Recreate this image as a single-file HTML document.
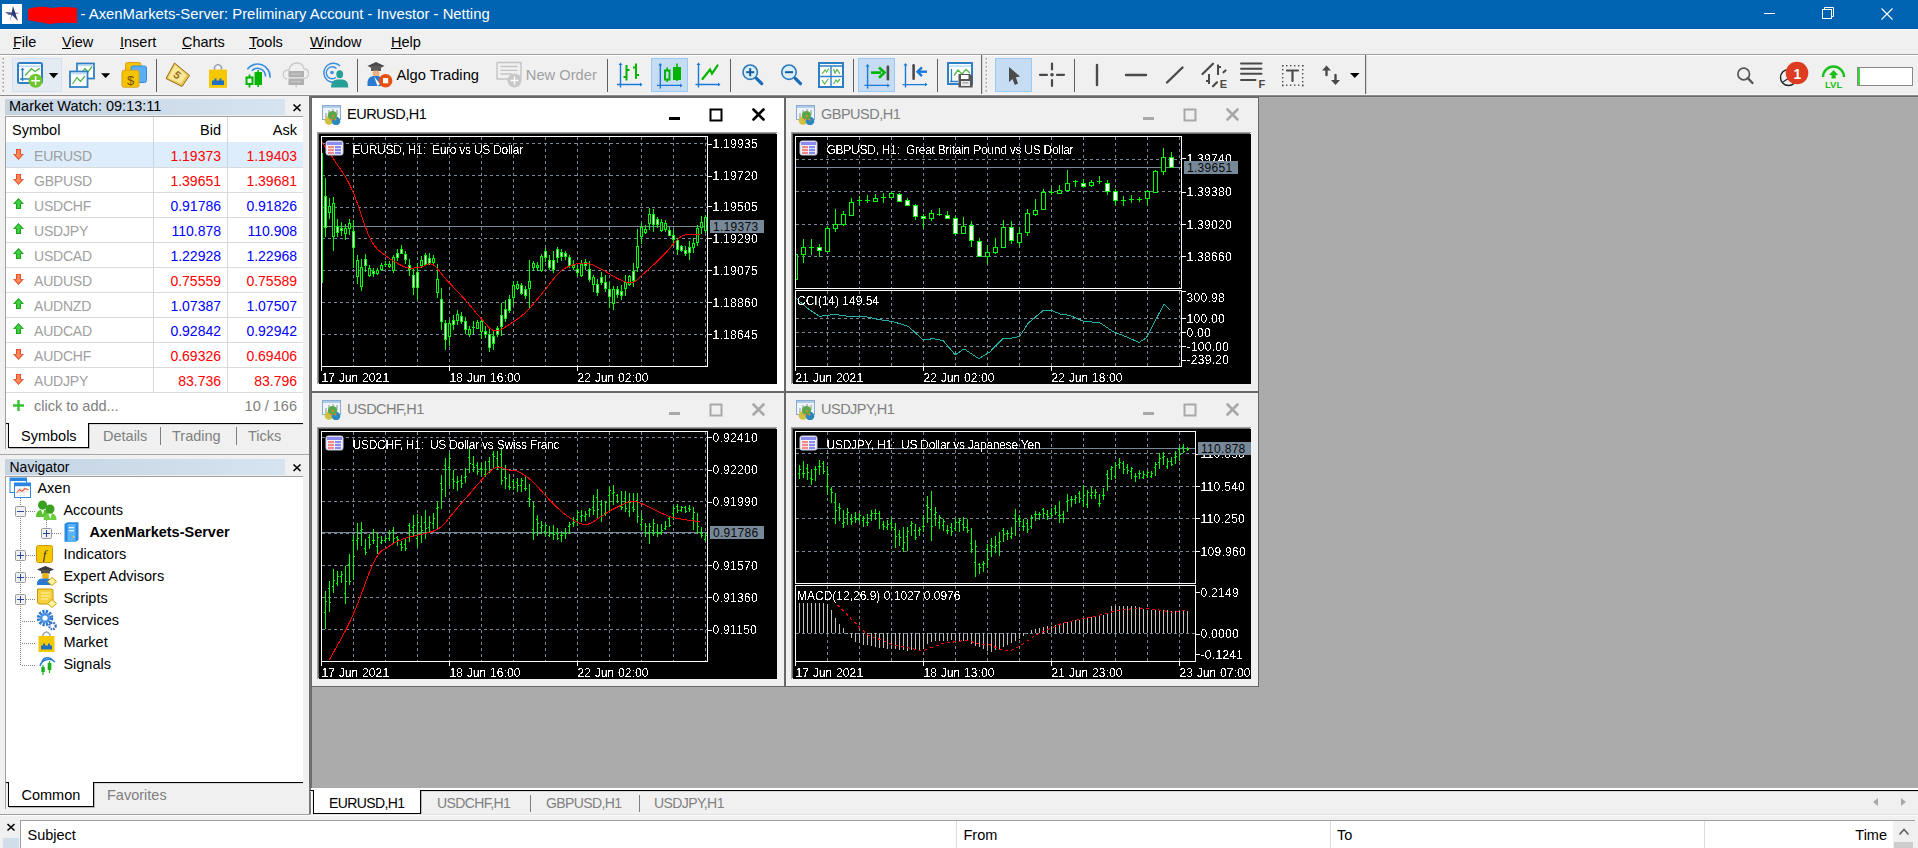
<!DOCTYPE html><html><head><meta charset="utf-8"><style>
*{margin:0;padding:0;box-sizing:border-box}
html,body{width:1918px;height:848px;overflow:hidden;background:#f0f0f0;font-family:"Liberation Sans",sans-serif}
.t{position:absolute;white-space:nowrap;line-height:1}
.r{position:absolute}
.s{position:absolute;overflow:hidden}
</style></head><body><div class="r" style="left:0px;top:0px;width:1918px;height:29px;background:#0063b1;"></div>
<div class="r" style="left:0px;top:28px;width:1918px;height:1px;background:#0059a9;"></div>
<div class="r" style="left:0px;top:29px;width:1918px;height:1px;background:#fbfbfb;"></div>
<svg class="s" style="left:2px;top:4px;" width="20" height="20" viewBox="2 4 20 20"><rect x="2" y="4" width="20" height="20" fill="#fff"/><path d="M13 6 L10 21 L12 15 L18 21 Z" fill="#2a3a78"/><path d="M5 12 L20 13 L9 15 Z" fill="#2a3a78" opacity="0.85"/></svg>
<svg class="s" style="left:27px;top:5px;" width="52" height="20" viewBox="27 5 52 20"><path d="M28 9 Q40 5 52 8 Q64 6 77 8 L77 23 Q60 22 50 24 Q38 22 28 20 Z" fill="#ff0000"/></svg>
<div class="t" style="left:80.5px;top:7.43px;font-size:14.85px;color:#fff;font-weight:normal;">- AxenMarkets-Server: Preliminary Account - Investor - Netting</div>
<svg class="s" style="left:1760px;top:8px;" width="20" height="12" viewBox="1760 8 20 12"><rect x="1764" y="13" width="11" height="1" fill="#fff"/></svg>
<svg class="s" style="left:1815px;top:4px;" width="28" height="20" viewBox="1815 4 28 20"><rect x="1822.5" y="9.5" width="9" height="9" fill="none" stroke="#fff"/><path d="M1824.5 9.5 V7.5 H1833.5 V16.5 H1831.5" fill="none" stroke="#fff"/></svg>
<svg class="s" style="left:1875px;top:4px;" width="28" height="20" viewBox="1875 4 28 20"><path d="M1881.5 8.5 L1892.5 19.5 M1892.5 8.5 L1881.5 19.5" stroke="#fff" stroke-width="1.1"/></svg>
<div class="r" style="left:0px;top:30px;width:1918px;height:24px;background:#f0f0f0;"></div>
<div class="r" style="left:0px;top:54px;width:1918px;height:1px;background:#a0a0a0;"></div>
<div class="t" style="left:13px;top:34.73px;font-size:14.5px;color:#000;font-weight:normal;">File</div>
<div class="t" style="left:62px;top:34.73px;font-size:14.5px;color:#000;font-weight:normal;">View</div>
<div class="t" style="left:120px;top:34.73px;font-size:14.5px;color:#000;font-weight:normal;">Insert</div>
<div class="t" style="left:182px;top:34.73px;font-size:14.5px;color:#000;font-weight:normal;">Charts</div>
<div class="t" style="left:249px;top:34.73px;font-size:14.5px;color:#000;font-weight:normal;">Tools</div>
<div class="t" style="left:310px;top:34.73px;font-size:14.5px;color:#000;font-weight:normal;">Window</div>
<div class="t" style="left:391px;top:34.73px;font-size:14.5px;color:#000;font-weight:normal;">Help</div>
<div class="r" style="left:13px;top:48px;width:6.5px;height:1px;background:#000"></div>
<div class="r" style="left:62px;top:48px;width:8.7px;height:1px;background:#000"></div>
<div class="r" style="left:120px;top:48px;width:4.0px;height:1px;background:#000"></div>
<div class="r" style="left:182px;top:48px;width:9.0px;height:1px;background:#000"></div>
<div class="r" style="left:249px;top:48px;width:7.0px;height:1px;background:#000"></div>
<div class="r" style="left:310px;top:48px;width:13.5px;height:1px;background:#000"></div>
<div class="r" style="left:391px;top:48px;width:10.5px;height:1px;background:#000"></div>
<div class="r" style="left:0px;top:55px;width:1918px;height:41px;background:#f0f0f0;"></div>
<div class="r" style="left:0px;top:55px;width:1918px;height:1px;background:#ffffff;"></div>
<div class="r" style="left:0px;top:94px;width:1918px;height:1px;background:#f6f6f6;"></div>
<div class="r" style="left:0px;top:95px;width:1918px;height:1px;background:#8a8a8a;"></div>
<svg class="s" style="left:0;top:54px" width="1918" height="42" viewBox="0 54 1918 42"><rect x="2.5" y="58" width="1.5" height="1.5" fill="#9a9a9a"/><rect x="2.5" y="62" width="1.5" height="1.5" fill="#9a9a9a"/><rect x="2.5" y="66" width="1.5" height="1.5" fill="#9a9a9a"/><rect x="2.5" y="70" width="1.5" height="1.5" fill="#9a9a9a"/><rect x="2.5" y="74" width="1.5" height="1.5" fill="#9a9a9a"/><rect x="2.5" y="78" width="1.5" height="1.5" fill="#9a9a9a"/><rect x="2.5" y="82" width="1.5" height="1.5" fill="#9a9a9a"/><rect x="2.5" y="86" width="1.5" height="1.5" fill="#9a9a9a"/><rect x="2.5" y="90" width="1.5" height="1.5" fill="#9a9a9a"/><rect x="985.5" y="58" width="1.5" height="1.5" fill="#9a9a9a"/><rect x="985.5" y="62" width="1.5" height="1.5" fill="#9a9a9a"/><rect x="985.5" y="66" width="1.5" height="1.5" fill="#9a9a9a"/><rect x="985.5" y="70" width="1.5" height="1.5" fill="#9a9a9a"/><rect x="985.5" y="74" width="1.5" height="1.5" fill="#9a9a9a"/><rect x="985.5" y="78" width="1.5" height="1.5" fill="#9a9a9a"/><rect x="985.5" y="82" width="1.5" height="1.5" fill="#9a9a9a"/><rect x="985.5" y="86" width="1.5" height="1.5" fill="#9a9a9a"/><rect x="985.5" y="90" width="1.5" height="1.5" fill="#9a9a9a"/><rect x="12.5" y="58.5" width="49" height="33" fill="#e4ebf3" stroke="#d2e2f2"/><rect x="18" y="63" width="24" height="20" rx="1.5" fill="#fff" stroke="#2f7fc4" stroke-width="2"/><rect x="19" y="65.5" width="22" height="1.3" fill="#a8d4f8"/><path d="M22.5 69 V81 M20 79 H31" stroke="#2f7fc4" stroke-width="1.5"/><path d="M20.5 70 L22.5 67.5 L24.5 70 Z" fill="#2f7fc4"/><path d="M25 75.5 L31.5 68.8 L35 71.5 L39.8 68.3" fill="none" stroke="#52b848" stroke-width="1.4"/><circle cx="35.6" cy="80.7" r="7" fill="#6fc72f"/><path d="M35.6 76.3 V85.1 M31.2 80.7 H40" stroke="#fff" stroke-width="1.5"/><path d="M49 73 L58.3 73 L53.65 78.2 Z" fill="#000"/><rect x="77" y="63.5" width="17" height="15" fill="#fff" stroke="#2f7fc4" stroke-width="1.8"/><rect x="77.5" y="65.2" width="16" height="1" fill="#a8d4f8"/><path d="M80 75 L85 68.5 L88 72 L92 66.5" fill="none" stroke="#52b848" stroke-width="1.3"/><rect x="70" y="71.5" width="17.5" height="15.5" fill="#fff" stroke="#2f7fc4" stroke-width="1.8"/><rect x="70.5" y="73.3" width="16.5" height="1" fill="#a8d4f8"/><path d="M72.5 84 L77 77.5 L80.5 81.5 L85 76" fill="none" stroke="#52b848" stroke-width="1.3"/><path d="M101 73.2 L110.2 73.2 L105.6 78 Z" fill="#000"/><rect x="125.5" y="62.5" width="15.5" height="13" rx="2" fill="#f5c400" stroke="#d9a020"/><rect x="131" y="66" width="15.5" height="16.5" rx="2" fill="#5aaef5" stroke="#3a8ad8"/><rect x="122" y="70.2" width="17" height="17" rx="2" fill="#f5c400" stroke="#d9a020"/><text x="130.5" y="84.5" font-size="13" font-family="Liberation Sans" fill="#7a5000" text-anchor="middle">$</text><rect x="156" y="59" width="1" height="33" fill="#5f5f5f"/><rect x="357" y="59" width="1" height="33" fill="#5f5f5f"/><rect x="607" y="59" width="1" height="33" fill="#5f5f5f"/><rect x="730" y="59" width="1" height="33" fill="#5f5f5f"/><rect x="853" y="59" width="1" height="33" fill="#5f5f5f"/><rect x="937" y="59" width="1" height="33" fill="#5f5f5f"/><rect x="1074" y="59" width="1" height="33" fill="#5f5f5f"/><path d="M166 78.5 L174.5 63 L189.5 75.5 L182 86.5 Z" fill="#e8c850" stroke="#9a6a20" stroke-width="1"/><path d="M168 78 L175 65 L186.5 75 L181 83.5 Z" fill="#f8e89a"/><text x="177.5" y="79" font-size="11" font-weight="bold" font-family="Liberation Sans" fill="#9a6a20" transform="rotate(40 177.5 75)" text-anchor="middle">5</text><path d="M214.5 70 V67 Q218 62 221.5 67 V70" fill="none" stroke="#9aa4b0" stroke-width="1.6"/><rect x="209" y="69.6" width="18" height="18.2" fill="#f5c800"/><path d="M212 85 V80.5 H214.5 V78.5 H216.5 V80.5 H219.5 V78.5 H221.5 V80.5 H224 V85 Z" fill="#1e6fc0"/><path d="M251.8 70.8 A8 8 0 0 1 265.5 76.5" fill="none" stroke="#3a8ee0" stroke-width="1.6"/><path d="M247.3 69.3 A12.5 12.5 0 0 1 269.95 77.6" fill="none" stroke="#3a8ee0" stroke-width="1.7"/><rect x="248.6" y="74.5" width="1.8" height="13" fill="#00b400"/><rect x="246.5" y="77.5" width="6" height="6.5" fill="#f0f0f0" stroke="#00b400" stroke-width="2"/><rect x="257.3" y="70" width="1.6" height="17" fill="#00b400"/><rect x="254.5" y="72" width="7.5" height="13" fill="#00b400"/><path d="M287 79 Q282 78 283.5 73 Q285 69 289 70.5 Q290 63 297 63 Q303 63 304 69 Q309 69 308.5 74 Q308 78 304 78.5" fill="none" stroke="#c8c8c8" stroke-width="1.3"/><rect x="288.5" y="71" width="15.5" height="6.3" fill="#b0b0b0"/><rect x="288.5" y="78.5" width="15.5" height="6.5" fill="#b0b0b0"/><rect x="291" y="73.5" width="10" height="1.2" fill="#c8c8c8"/><rect x="291" y="81" width="10" height="1.2" fill="#c8c8c8"/><rect x="295.7" y="85" width="1" height="2.5" fill="#c0c0c0"/><circle cx="332" cy="72.5" r="1.8" fill="#3a8ee0"/><path d="M336.5 68.5 A6 6 0 1 0 336 77.5" fill="none" stroke="#3a8ee0" stroke-width="1.4"/><path d="M340 66 A9.5 9.5 0 1 0 337 81.5" fill="none" stroke="#3a8ee0" stroke-width="1.5"/><ellipse cx="339.7" cy="74.2" rx="3.4" ry="4" fill="#26a096"/><path d="M331 87.6 Q331 80 337 79.5 H342.5 Q348.5 80 348.3 87.6 Z" fill="#26a096"/><path d="M367.5 66 L376 62 L384.5 66 L376 70 Z" fill="#4a4a4a"/><rect x="371" y="66" width="10" height="5" fill="#5a5a5a"/><ellipse cx="376" cy="73.5" rx="3.5" ry="3" fill="#f0b080"/><path d="M367.5 86 Q366.5 77 373 76 L379 76 Q382 78 382 86 Z" fill="#2a7ad0"/><path d="M374 76.5 L377.5 86 L380 84 Z" fill="#fff"/><circle cx="385.6" cy="80.7" r="6.8" fill="#e85010"/><rect x="383" y="78.1" width="5.2" height="5.2" fill="#fff"/><text x="396.5" y="80.4" font-size="14.7" font-family="Liberation Sans" fill="#000">Algo Trading</text><path d="M497 62.5 H521 V79 M497 62.5 V79 H510" fill="none" stroke="#c4c4c4" stroke-width="1.4"/><path d="M500.5 66.5 H517.5 M500.5 70.3 H517.5 M500.5 74 H512" stroke="#c4c4c4" stroke-width="1.3"/><circle cx="514.5" cy="80.5" r="7" fill="#c8c8c8"/><path d="M514.5 76.5 V84.5 M510.5 80.5 H518.5" stroke="#fff" stroke-width="1.4"/><text x="525.8" y="80.4" font-size="14.7" font-family="Liberation Sans" fill="#a0a0a0">New Order</text><path d="M620.5 64.0 V87.5 M617 84.5 H641.0" stroke="#1a78d8" stroke-width="1.4"/><path d="M618.5 65.0 L620.5 62.5 L622.5 65.0 Z M640.0 82.5 L642.5 84.5 L640.0 86.5 Z" fill="#1a78d8"/><path d="M626.5 65 V80.5 M623.5 77 H626.5 M626.5 70 H629.5 M636 63.5 V78.8 M633 67.5 H636 M636 75 H639" stroke="#00b400" stroke-width="2"/><rect x="651.5" y="58.5" width="36" height="33" fill="#c5dcf2" stroke="#99c9f5"/><path d="M660.3 64.5 V88.4 M657 85.4 H681.0" stroke="#1a78d8" stroke-width="1.4"/><path d="M658.3 65.5 L660.3 63 L662.3 65.5 Z M680.0 83.4 L682.5 85.4 L680.0 87.4 Z" fill="#1a78d8"/><path d="M667.2 67.5 V82 M677 63.5 V81" stroke="#00b400" stroke-width="1.6"/><rect x="665" y="70.5" width="4.5" height="9" fill="#c5dcf2" stroke="#00b400" stroke-width="2"/><rect x="673" y="67" width="8" height="13" fill="#00b400"/><path d="M698.5 64.0 V87.5 M695.5 84.5 H719.0" stroke="#1a78d8" stroke-width="1.4"/><path d="M696.5 65.0 L698.5 62.5 L700.5 65.0 Z M718.0 82.5 L720.5 84.5 L718.0 86.5 Z" fill="#1a78d8"/><path d="M702.5 79 L710 69.5 L712 73.5 L717.5 65.5" fill="none" stroke="#00b400" stroke-width="2.2" stroke-linecap="round"/><path d="M756.2 78.2 L761.7 83.7" stroke="#1a6ab8" stroke-width="3.2" stroke-linecap="round"/><circle cx="750.2" cy="72.2" r="7.2" fill="#d8eef8" stroke="#2d78b8" stroke-width="1.6"/><path d="M746.2 72.2 H754.2" stroke="#1a5a98" stroke-width="2"/><path d="M750.2 68.2 V76.2" stroke="#1a5a98" stroke-width="2"/><path d="M795 78.2 L800.5 83.7" stroke="#1a6ab8" stroke-width="3.2" stroke-linecap="round"/><circle cx="789" cy="72.2" r="7.2" fill="#d8eef8" stroke="#2d78b8" stroke-width="1.6"/><path d="M785 72.2 H793" stroke="#1a5a98" stroke-width="2"/><rect x="819" y="63" width="24" height="24" fill="#fff" stroke="#2f7fc4" stroke-width="2"/><path d="M819 66 H843 M831 66 V87 M819 76.5 H843" stroke="#2f7fc4" stroke-width="1.4"/><path d="M822 74 L825 70 L826.5 72 L829 68.5 M833.5 69 L835 73 L837 69.5 L840 74 M822 80 L824.5 84 L828.5 78.5 M833.5 84 L836 80 L837.5 82 L840 79" fill="none" stroke="#52b848" stroke-width="1.2"/><rect x="858.5" y="58.5" width="36" height="33" fill="#c5dcf2" stroke="#99c9f5"/><path d="M867.6 65.5 V88.4 M864.5 85.4 H888.3" stroke="#1a78d8" stroke-width="1.4"/><path d="M865.6 66.5 L867.6 64 L869.6 66.5 Z M887.3 83.4 L889.8 85.4 L887.3 87.4 Z" fill="#1a78d8"/><path d="M871 72.6 H881" stroke="#00b400" stroke-width="2.6"/><path d="M879 67.5 L884.5 72.6 L879 77.7" fill="none" stroke="#00b400" stroke-width="2.6"/><rect x="886.6" y="65.5" width="2.6" height="15" rx="1.2" fill="#4a4a4a"/><path d="M905.5 64.5 V87.6 M902.5 84.6 H926.0" stroke="#1a78d8" stroke-width="1.4"/><path d="M903.5 65.5 L905.5 63 L907.5 65.5 Z M925.0 82.6 L927.5 84.6 L925.0 86.6 Z" fill="#1a78d8"/><rect x="912.3" y="64" width="2.6" height="16" rx="1.2" fill="#4a4a4a"/><path d="M927 71.7 H919" stroke="#1a78d8" stroke-width="2.4"/><path d="M922 67.3 L917.5 71.7 L922 76.1" fill="none" stroke="#1a78d8" stroke-width="2.4"/><rect x="948" y="63" width="24" height="21" fill="#fff" stroke="#2f7fc4" stroke-width="2"/><rect x="949" y="65.5" width="22" height="1.2" fill="#a8d4f8"/><path d="M951.5 69 V81.5 M950 81.5 H958" stroke="#2f7fc4" stroke-width="1.3"/><path d="M954 75.5 L958 70 L962 74 L966 69.5 L970 73" fill="none" stroke="#52b848" stroke-width="1.3"/><path d="M958.5 74 H970 L972.6 76.5 V87.4 H958.5 Z" fill="#555"/><rect x="961" y="75" width="7.5" height="4" fill="#fff"/><rect x="961" y="81" width="9" height="5" fill="#e8e8e8"/><rect x="962.5" y="82.5" width="6" height="0.8" fill="#777"/><rect x="981" y="55" width="1.2" height="39" fill="#6a6a6a"/><rect x="1365" y="55" width="1.2" height="39" fill="#6a6a6a"/><rect x="995.5" y="58.5" width="36" height="33" fill="#c5dcf2" stroke="#99c9f5"/><path d="M1009 67 L1020 76.5 L1015.8 77.3 L1018 83.5 L1014.8 85 L1012.5 79 L1009 82 Z" fill="#4a4a4a"/><path d="M1052 63.5 V69.5 M1052 80 V86 M1040 74.8 H1047 M1057 74.8 H1064" stroke="#4a4a4a" stroke-width="2.2" stroke-linecap="round"/><circle cx="1052" cy="74.8" r="1.8" fill="#4a4a4a"/><path d="M1097 65 V85 M1126 75 H1146 M1167 82.5 L1182.5 67.5" stroke="#4a4a4a" stroke-width="2.4" stroke-linecap="round"/><path d="M1202.5 74 L1213 63.7 M1213 86.3 L1217 82.3 M1223.5 72.3 L1225.5 70.5" stroke="#4a4a4a" stroke-width="2.2" stroke-linecap="round"/><path d="M1218 64.5 V75 M1218 67 H1221 M1209 74 V84 M1206 81 H1209" stroke="#4a4a4a" stroke-width="2"/><text x="1219.8" y="87.5" font-size="11" font-weight="bold" font-family="Liberation Sans" fill="#4a4a4a">E</text><path d="M1241 63.6 H1261.5 M1241 68.8 H1261.5 M1241 73.8 H1261.5 M1241 80 H1255.5" stroke="#4a4a4a" stroke-width="2" stroke-linecap="round"/><text x="1258.5" y="87.5" font-size="11" font-weight="bold" font-family="Liberation Sans" fill="#4a4a4a">F</text><rect x="1282" y="65" width="1.4" height="1.4" fill="#4a4a4a"/><rect x="1282" y="84.5" width="1.4" height="1.4" fill="#4a4a4a"/><rect x="1282" y="65" width="1.4" height="1.4" fill="#4a4a4a"/><rect x="1302" y="65" width="1.4" height="1.4" fill="#4a4a4a"/><rect x="1286" y="65" width="1.4" height="1.4" fill="#4a4a4a"/><rect x="1286" y="84.5" width="1.4" height="1.4" fill="#4a4a4a"/><rect x="1282" y="69" width="1.4" height="1.4" fill="#4a4a4a"/><rect x="1302" y="69" width="1.4" height="1.4" fill="#4a4a4a"/><rect x="1290" y="65" width="1.4" height="1.4" fill="#4a4a4a"/><rect x="1290" y="84.5" width="1.4" height="1.4" fill="#4a4a4a"/><rect x="1282" y="73" width="1.4" height="1.4" fill="#4a4a4a"/><rect x="1302" y="73" width="1.4" height="1.4" fill="#4a4a4a"/><rect x="1294" y="65" width="1.4" height="1.4" fill="#4a4a4a"/><rect x="1294" y="84.5" width="1.4" height="1.4" fill="#4a4a4a"/><rect x="1282" y="77" width="1.4" height="1.4" fill="#4a4a4a"/><rect x="1302" y="77" width="1.4" height="1.4" fill="#4a4a4a"/><rect x="1298" y="65" width="1.4" height="1.4" fill="#4a4a4a"/><rect x="1298" y="84.5" width="1.4" height="1.4" fill="#4a4a4a"/><rect x="1282" y="81" width="1.4" height="1.4" fill="#4a4a4a"/><rect x="1302" y="81" width="1.4" height="1.4" fill="#4a4a4a"/><rect x="1302" y="65" width="1.4" height="1.4" fill="#4a4a4a"/><rect x="1302" y="84.5" width="1.4" height="1.4" fill="#4a4a4a"/><rect x="1282" y="85" width="1.4" height="1.4" fill="#4a4a4a"/><rect x="1302" y="85" width="1.4" height="1.4" fill="#4a4a4a"/><path d="M1287 70.5 H1298 M1292.5 70.5 V81" stroke="#4a4a4a" stroke-width="2.2" stroke-linecap="round"/><path d="M1322 70.5 L1326.5 65.5 L1331 70.5 Z M1331 80 L1335.5 85 L1340 80 Z" fill="#4a4a4a"/><path d="M1326.5 69 V75 M1335.5 75 V81" stroke="#4a4a4a" stroke-width="2.4" stroke-linecap="round"/><path d="M1350 73 L1359.5 73 L1354.75 78 Z" fill="#000"/><circle cx="1743.7" cy="74" r="5.8" fill="none" stroke="#555" stroke-width="1.7"/><path d="M1747.8 78.2 L1752.5 83" stroke="#555" stroke-width="2.4" stroke-linecap="round"/><circle cx="1788.5" cy="77.5" r="8" fill="none" stroke="#222" stroke-width="1.4"/><path d="M1783 82 L1789 78" stroke="#222" stroke-width="1.2"/><circle cx="1797" cy="73" r="11.3" fill="#dd3b22"/><text x="1797.3" y="79" font-size="14" font-weight="bold" font-family="Liberation Sans" fill="#fff" text-anchor="middle">1</text><path d="M1823 77 A10.5 10.5 0 0 1 1844 77" fill="none" stroke="#1cc01c" stroke-width="2.4"/><path d="M1829 75 L1833.6 70 L1838.2 75 H1835.7 V78.5 H1831.5 V75 Z" fill="#1cc01c"/><text x="1833.6" y="88.3" font-size="9.5" font-weight="bold" font-family="Liberation Sans" fill="#1cc01c" text-anchor="middle">LVL</text><rect x="1857.5" y="67.5" width="55" height="18" fill="#fff" stroke="#888" stroke-width="1"/><rect x="1858" y="68" width="2" height="17" fill="#3bd83b"/></svg>
<div class="r" style="left:0px;top:96px;width:309px;height:719px;background:#f0f0f0;"></div>
<div class="r" style="left:309px;top:96px;width:3px;height:692px;background:#6e6e6e;"></div>
<div class="r" style="left:5px;top:99px;width:280px;height:16px;background:linear-gradient(90deg,#c5d4e3,#d6e3f0)"></div>
<div class="t" style="left:9px;top:99.23px;font-size:14.5px;color:#000;font-weight:normal;">Market Watch: 09:13:11</div>
<svg class="s" style="left:290px;top:101px;" width="14" height="12" viewBox="290 101 14 12"><path d="M293.5 104.5 L300.5 111 M300.5 104.5 L293.5 111" stroke="#000" stroke-width="1.6"/></svg>
<div class="r" style="left:5px;top:116px;width:299px;height:307px;background:#ffffff;border-top:1px solid #a0a0a0;border-left:1px solid #a0a0a0"></div>
<div class="r" style="left:303px;top:116px;width:2px;height:307px;background:#f0f0f0;"></div>
<div class="r" style="left:153px;top:117px;width:1px;height:276px;background:#d8d8d8;"></div>
<div class="r" style="left:227px;top:117px;width:1px;height:276px;background:#d8d8d8;"></div>
<div class="t" style="left:12px;top:123.23px;font-size:14.5px;color:#000;font-weight:normal;">Symbol</div>
<div class="t" style="right:1697px;top:123.23px;font-size:14.5px;color:#000;font-weight:normal;">Bid</div>
<div class="t" style="right:1621px;top:123.23px;font-size:14.5px;color:#000;font-weight:normal;">Ask</div>
<div class="r" style="left:6px;top:142px;width:297px;height:25px;background:#deedfb;"></div>
<div class="r" style="left:153px;top:142px;width:1px;height:25px;background:#c8d4de;"></div>
<div class="r" style="left:227px;top:142px;width:1px;height:25px;background:#c8d4de;"></div>
<div class="r" style="left:6px;top:167px;width:297px;height:1px;background:#dadada;"></div>
<svg class="s" style="left:12px;top:147px;" width="14" height="14" viewBox="12 147 14 14"><path d="M18.5 160 L24 154 L21 154 L21 149 L16 149 L16 154 L13 154 Z" fill="#e8502a"/><path d="M18.5 158.5 L22 154.5 L19.8 154.5 L19.8 150 L17.2 150 L17.2 154.5 L15 154.5 Z" fill="#ff8a5c"/></svg>
<div class="t" style="left:34px;top:148.65px;font-size:14px;color:#a0a0a0;font-weight:normal;letter-spacing:-0.2px">EURUSD</div>
<div class="t" style="right:1697px;top:148.65px;font-size:14px;color:#ff0000;font-weight:normal;">1.19373</div>
<div class="t" style="right:1621px;top:148.65px;font-size:14px;color:#ff0000;font-weight:normal;">1.19403</div>
<div class="r" style="left:6px;top:192px;width:297px;height:1px;background:#dadada;"></div>
<svg class="s" style="left:12px;top:172px;" width="14" height="14" viewBox="12 172 14 14"><path d="M18.5 185 L24 179 L21 179 L21 174 L16 174 L16 179 L13 179 Z" fill="#e8502a"/><path d="M18.5 183.5 L22 179.5 L19.8 179.5 L19.8 175 L17.2 175 L17.2 179.5 L15 179.5 Z" fill="#ff8a5c"/></svg>
<div class="t" style="left:34px;top:173.65px;font-size:14px;color:#a0a0a0;font-weight:normal;letter-spacing:-0.2px">GBPUSD</div>
<div class="t" style="right:1697px;top:173.65px;font-size:14px;color:#ff0000;font-weight:normal;">1.39651</div>
<div class="t" style="right:1621px;top:173.65px;font-size:14px;color:#ff0000;font-weight:normal;">1.39681</div>
<div class="r" style="left:6px;top:217px;width:297px;height:1px;background:#dadada;"></div>
<svg class="s" style="left:12px;top:197px;" width="14" height="14" viewBox="12 197 14 14"><path d="M18.5 198 L24 204 L21 204 L21 209 L16 209 L16 204 L13 204 Z" fill="#1aa51a"/><path d="M18.5 199.5 L22 203.5 L19.8 203.5 L19.8 208 L17.2 208 L17.2 203.5 L15 203.5 Z" fill="#44d044"/></svg>
<div class="t" style="left:34px;top:198.65px;font-size:14px;color:#a0a0a0;font-weight:normal;letter-spacing:-0.2px">USDCHF</div>
<div class="t" style="right:1697px;top:198.65px;font-size:14px;color:#0000ff;font-weight:normal;">0.91786</div>
<div class="t" style="right:1621px;top:198.65px;font-size:14px;color:#0000ff;font-weight:normal;">0.91826</div>
<div class="r" style="left:6px;top:242px;width:297px;height:1px;background:#dadada;"></div>
<svg class="s" style="left:12px;top:222px;" width="14" height="14" viewBox="12 222 14 14"><path d="M18.5 223 L24 229 L21 229 L21 234 L16 234 L16 229 L13 229 Z" fill="#1aa51a"/><path d="M18.5 224.5 L22 228.5 L19.8 228.5 L19.8 233 L17.2 233 L17.2 228.5 L15 228.5 Z" fill="#44d044"/></svg>
<div class="t" style="left:34px;top:223.65px;font-size:14px;color:#a0a0a0;font-weight:normal;letter-spacing:-0.2px">USDJPY</div>
<div class="t" style="right:1697px;top:223.65px;font-size:14px;color:#0000ff;font-weight:normal;">110.878</div>
<div class="t" style="right:1621px;top:223.65px;font-size:14px;color:#0000ff;font-weight:normal;">110.908</div>
<div class="r" style="left:6px;top:267px;width:297px;height:1px;background:#dadada;"></div>
<svg class="s" style="left:12px;top:247px;" width="14" height="14" viewBox="12 247 14 14"><path d="M18.5 248 L24 254 L21 254 L21 259 L16 259 L16 254 L13 254 Z" fill="#1aa51a"/><path d="M18.5 249.5 L22 253.5 L19.8 253.5 L19.8 258 L17.2 258 L17.2 253.5 L15 253.5 Z" fill="#44d044"/></svg>
<div class="t" style="left:34px;top:248.65px;font-size:14px;color:#a0a0a0;font-weight:normal;letter-spacing:-0.2px">USDCAD</div>
<div class="t" style="right:1697px;top:248.65px;font-size:14px;color:#0000ff;font-weight:normal;">1.22928</div>
<div class="t" style="right:1621px;top:248.65px;font-size:14px;color:#0000ff;font-weight:normal;">1.22968</div>
<div class="r" style="left:6px;top:292px;width:297px;height:1px;background:#dadada;"></div>
<svg class="s" style="left:12px;top:272px;" width="14" height="14" viewBox="12 272 14 14"><path d="M18.5 285 L24 279 L21 279 L21 274 L16 274 L16 279 L13 279 Z" fill="#e8502a"/><path d="M18.5 283.5 L22 279.5 L19.8 279.5 L19.8 275 L17.2 275 L17.2 279.5 L15 279.5 Z" fill="#ff8a5c"/></svg>
<div class="t" style="left:34px;top:273.65px;font-size:14px;color:#a0a0a0;font-weight:normal;letter-spacing:-0.2px">AUDUSD</div>
<div class="t" style="right:1697px;top:273.65px;font-size:14px;color:#ff0000;font-weight:normal;">0.75559</div>
<div class="t" style="right:1621px;top:273.65px;font-size:14px;color:#ff0000;font-weight:normal;">0.75589</div>
<div class="r" style="left:6px;top:317px;width:297px;height:1px;background:#dadada;"></div>
<svg class="s" style="left:12px;top:297px;" width="14" height="14" viewBox="12 297 14 14"><path d="M18.5 298 L24 304 L21 304 L21 309 L16 309 L16 304 L13 304 Z" fill="#1aa51a"/><path d="M18.5 299.5 L22 303.5 L19.8 303.5 L19.8 308 L17.2 308 L17.2 303.5 L15 303.5 Z" fill="#44d044"/></svg>
<div class="t" style="left:34px;top:298.65px;font-size:14px;color:#a0a0a0;font-weight:normal;letter-spacing:-0.2px">AUDNZD</div>
<div class="t" style="right:1697px;top:298.65px;font-size:14px;color:#0000ff;font-weight:normal;">1.07387</div>
<div class="t" style="right:1621px;top:298.65px;font-size:14px;color:#0000ff;font-weight:normal;">1.07507</div>
<div class="r" style="left:6px;top:342px;width:297px;height:1px;background:#dadada;"></div>
<svg class="s" style="left:12px;top:322px;" width="14" height="14" viewBox="12 322 14 14"><path d="M18.5 323 L24 329 L21 329 L21 334 L16 334 L16 329 L13 329 Z" fill="#1aa51a"/><path d="M18.5 324.5 L22 328.5 L19.8 328.5 L19.8 333 L17.2 333 L17.2 328.5 L15 328.5 Z" fill="#44d044"/></svg>
<div class="t" style="left:34px;top:323.65px;font-size:14px;color:#a0a0a0;font-weight:normal;letter-spacing:-0.2px">AUDCAD</div>
<div class="t" style="right:1697px;top:323.65px;font-size:14px;color:#0000ff;font-weight:normal;">0.92842</div>
<div class="t" style="right:1621px;top:323.65px;font-size:14px;color:#0000ff;font-weight:normal;">0.92942</div>
<div class="r" style="left:6px;top:367px;width:297px;height:1px;background:#dadada;"></div>
<svg class="s" style="left:12px;top:347px;" width="14" height="14" viewBox="12 347 14 14"><path d="M18.5 360 L24 354 L21 354 L21 349 L16 349 L16 354 L13 354 Z" fill="#e8502a"/><path d="M18.5 358.5 L22 354.5 L19.8 354.5 L19.8 350 L17.2 350 L17.2 354.5 L15 354.5 Z" fill="#ff8a5c"/></svg>
<div class="t" style="left:34px;top:348.65px;font-size:14px;color:#a0a0a0;font-weight:normal;letter-spacing:-0.2px">AUDCHF</div>
<div class="t" style="right:1697px;top:348.65px;font-size:14px;color:#ff0000;font-weight:normal;">0.69326</div>
<div class="t" style="right:1621px;top:348.65px;font-size:14px;color:#ff0000;font-weight:normal;">0.69406</div>
<div class="r" style="left:6px;top:392px;width:297px;height:1px;background:#dadada;"></div>
<svg class="s" style="left:12px;top:372px;" width="14" height="14" viewBox="12 372 14 14"><path d="M18.5 385 L24 379 L21 379 L21 374 L16 374 L16 379 L13 379 Z" fill="#e8502a"/><path d="M18.5 383.5 L22 379.5 L19.8 379.5 L19.8 375 L17.2 375 L17.2 379.5 L15 379.5 Z" fill="#ff8a5c"/></svg>
<div class="t" style="left:34px;top:373.65px;font-size:14px;color:#a0a0a0;font-weight:normal;letter-spacing:-0.2px">AUDJPY</div>
<div class="t" style="right:1697px;top:373.65px;font-size:14px;color:#ff0000;font-weight:normal;">83.736</div>
<div class="t" style="right:1621px;top:373.65px;font-size:14px;color:#ff0000;font-weight:normal;">83.796</div>
<svg class="s" style="left:12px;top:398px;" width="14" height="14" viewBox="12 398 14 14"><path d="M18.5 400 V411 M13 405.5 H24" stroke="#36c236" stroke-width="2.4"/></svg>
<div class="t" style="left:34px;top:398.73px;font-size:14.5px;color:#808080;font-weight:normal;">click to add...</div>
<div class="t" style="right:1621px;top:398.73px;font-size:14.5px;color:#808080;font-weight:normal;">10 / 166</div>
<div class="r" style="left:5px;top:424px;width:298px;height:24px;background:#f0f0f0;"></div>
<div class="r" style="left:5px;top:423px;width:298px;height:1px;background:#000;"></div>
<div class="r" style="left:5px;top:424px;width:298px;height:1px;background:#d8d8d8;"></div>
<div class="r" style="left:8px;top:423px;width:81px;height:25px;background:#fff;border:1px solid #000;border-top:none;box-shadow:1px 1px 0 #b8b8b8"></div>
<div class="r" style="left:9px;top:423px;width:79px;height:2px;background:#fff;"></div>
<div class="t" style="left:21px;top:428.73px;font-size:14.5px;color:#000;font-weight:normal;">Symbols</div>
<div class="t" style="left:103px;top:428.73px;font-size:14.5px;color:#808080;font-weight:normal;">Details</div>
<div class="r" style="left:160px;top:427px;width:1px;height:18px;background:#808080;"></div>
<div class="t" style="left:172px;top:428.73px;font-size:14.5px;color:#808080;font-weight:normal;">Trading</div>
<div class="r" style="left:236px;top:427px;width:1px;height:18px;background:#808080;"></div>
<div class="t" style="left:248px;top:428.73px;font-size:14.5px;color:#808080;font-weight:normal;">Ticks</div>
<div class="r" style="left:5px;top:116px;width:1px;height:333px;background:#a0a0a0;"></div>
<div class="r" style="left:0px;top:454px;width:309px;height:1px;background:#a8a8a8;"></div>
<div class="r" style="left:5px;top:459px;width:280px;height:16px;background:linear-gradient(90deg,#c5d4e3,#d6e3f0)"></div>
<div class="t" style="left:9.5px;top:459.65px;font-size:14px;color:#000;font-weight:normal;">Navigator</div>
<svg class="s" style="left:290px;top:461px;" width="14" height="12" viewBox="290 461 14 12"><path d="M293.5 464.5 L300.5 471 M300.5 464.5 L293.5 471" stroke="#000" stroke-width="1.6"/></svg>
<div class="r" style="left:5px;top:476px;width:299px;height:306px;background:#ffffff;border-top:1px solid #a0a0a0;border-left:1px solid #a0a0a0"></div>
<div class="r" style="left:303px;top:476px;width:2px;height:306px;background:#f0f0f0;"></div>
<svg class="s" style="left:6px;top:477px" width="297" height="204" viewBox="6 477 297 204"><rect x="20" y="498" width="1" height="1" fill="#808080"/><rect x="20" y="500" width="1" height="1" fill="#808080"/><rect x="20" y="502" width="1" height="1" fill="#808080"/><rect x="20" y="504" width="1" height="1" fill="#808080"/><rect x="20" y="506" width="1" height="1" fill="#808080"/><rect x="20" y="508" width="1" height="1" fill="#808080"/><rect x="20" y="510" width="1" height="1" fill="#808080"/><rect x="20" y="512" width="1" height="1" fill="#808080"/><rect x="20" y="514" width="1" height="1" fill="#808080"/><rect x="20" y="516" width="1" height="1" fill="#808080"/><rect x="20" y="518" width="1" height="1" fill="#808080"/><rect x="20" y="520" width="1" height="1" fill="#808080"/><rect x="20" y="522" width="1" height="1" fill="#808080"/><rect x="20" y="524" width="1" height="1" fill="#808080"/><rect x="20" y="526" width="1" height="1" fill="#808080"/><rect x="20" y="528" width="1" height="1" fill="#808080"/><rect x="20" y="530" width="1" height="1" fill="#808080"/><rect x="20" y="532" width="1" height="1" fill="#808080"/><rect x="20" y="534" width="1" height="1" fill="#808080"/><rect x="20" y="536" width="1" height="1" fill="#808080"/><rect x="20" y="538" width="1" height="1" fill="#808080"/><rect x="20" y="540" width="1" height="1" fill="#808080"/><rect x="20" y="542" width="1" height="1" fill="#808080"/><rect x="20" y="544" width="1" height="1" fill="#808080"/><rect x="20" y="546" width="1" height="1" fill="#808080"/><rect x="20" y="548" width="1" height="1" fill="#808080"/><rect x="20" y="550" width="1" height="1" fill="#808080"/><rect x="20" y="552" width="1" height="1" fill="#808080"/><rect x="20" y="554" width="1" height="1" fill="#808080"/><rect x="20" y="556" width="1" height="1" fill="#808080"/><rect x="20" y="558" width="1" height="1" fill="#808080"/><rect x="20" y="560" width="1" height="1" fill="#808080"/><rect x="20" y="562" width="1" height="1" fill="#808080"/><rect x="20" y="564" width="1" height="1" fill="#808080"/><rect x="20" y="566" width="1" height="1" fill="#808080"/><rect x="20" y="568" width="1" height="1" fill="#808080"/><rect x="20" y="570" width="1" height="1" fill="#808080"/><rect x="20" y="572" width="1" height="1" fill="#808080"/><rect x="20" y="574" width="1" height="1" fill="#808080"/><rect x="20" y="576" width="1" height="1" fill="#808080"/><rect x="20" y="578" width="1" height="1" fill="#808080"/><rect x="20" y="580" width="1" height="1" fill="#808080"/><rect x="20" y="582" width="1" height="1" fill="#808080"/><rect x="20" y="584" width="1" height="1" fill="#808080"/><rect x="20" y="586" width="1" height="1" fill="#808080"/><rect x="20" y="588" width="1" height="1" fill="#808080"/><rect x="20" y="590" width="1" height="1" fill="#808080"/><rect x="20" y="592" width="1" height="1" fill="#808080"/><rect x="20" y="594" width="1" height="1" fill="#808080"/><rect x="20" y="596" width="1" height="1" fill="#808080"/><rect x="20" y="598" width="1" height="1" fill="#808080"/><rect x="20" y="600" width="1" height="1" fill="#808080"/><rect x="20" y="602" width="1" height="1" fill="#808080"/><rect x="20" y="604" width="1" height="1" fill="#808080"/><rect x="20" y="606" width="1" height="1" fill="#808080"/><rect x="20" y="608" width="1" height="1" fill="#808080"/><rect x="20" y="610" width="1" height="1" fill="#808080"/><rect x="20" y="612" width="1" height="1" fill="#808080"/><rect x="20" y="614" width="1" height="1" fill="#808080"/><rect x="20" y="616" width="1" height="1" fill="#808080"/><rect x="20" y="618" width="1" height="1" fill="#808080"/><rect x="20" y="620" width="1" height="1" fill="#808080"/><rect x="20" y="622" width="1" height="1" fill="#808080"/><rect x="20" y="624" width="1" height="1" fill="#808080"/><rect x="20" y="626" width="1" height="1" fill="#808080"/><rect x="20" y="628" width="1" height="1" fill="#808080"/><rect x="20" y="630" width="1" height="1" fill="#808080"/><rect x="20" y="632" width="1" height="1" fill="#808080"/><rect x="20" y="634" width="1" height="1" fill="#808080"/><rect x="20" y="636" width="1" height="1" fill="#808080"/><rect x="20" y="638" width="1" height="1" fill="#808080"/><rect x="20" y="640" width="1" height="1" fill="#808080"/><rect x="20" y="642" width="1" height="1" fill="#808080"/><rect x="20" y="644" width="1" height="1" fill="#808080"/><rect x="20" y="646" width="1" height="1" fill="#808080"/><rect x="20" y="648" width="1" height="1" fill="#808080"/><rect x="20" y="650" width="1" height="1" fill="#808080"/><rect x="20" y="652" width="1" height="1" fill="#808080"/><rect x="20" y="654" width="1" height="1" fill="#808080"/><rect x="20" y="656" width="1" height="1" fill="#808080"/><rect x="20" y="658" width="1" height="1" fill="#808080"/><rect x="20" y="660" width="1" height="1" fill="#808080"/><rect x="20" y="662" width="1" height="1" fill="#808080"/><rect x="20" y="664" width="1" height="1" fill="#808080"/><rect x="46" y="520" width="1" height="1" fill="#808080"/><rect x="46" y="522" width="1" height="1" fill="#808080"/><rect x="46" y="524" width="1" height="1" fill="#808080"/><rect x="46" y="526" width="1" height="1" fill="#808080"/><rect x="22" y="511" width="1" height="1" fill="#808080"/><rect x="24" y="511" width="1" height="1" fill="#808080"/><rect x="26" y="511" width="1" height="1" fill="#808080"/><rect x="28" y="511" width="1" height="1" fill="#808080"/><rect x="30" y="511" width="1" height="1" fill="#808080"/><rect x="32" y="511" width="1" height="1" fill="#808080"/><rect x="34" y="511" width="1" height="1" fill="#808080"/><rect x="22" y="555" width="1" height="1" fill="#808080"/><rect x="24" y="555" width="1" height="1" fill="#808080"/><rect x="26" y="555" width="1" height="1" fill="#808080"/><rect x="28" y="555" width="1" height="1" fill="#808080"/><rect x="30" y="555" width="1" height="1" fill="#808080"/><rect x="32" y="555" width="1" height="1" fill="#808080"/><rect x="34" y="555" width="1" height="1" fill="#808080"/><rect x="22" y="577" width="1" height="1" fill="#808080"/><rect x="24" y="577" width="1" height="1" fill="#808080"/><rect x="26" y="577" width="1" height="1" fill="#808080"/><rect x="28" y="577" width="1" height="1" fill="#808080"/><rect x="30" y="577" width="1" height="1" fill="#808080"/><rect x="32" y="577" width="1" height="1" fill="#808080"/><rect x="34" y="577" width="1" height="1" fill="#808080"/><rect x="22" y="599" width="1" height="1" fill="#808080"/><rect x="24" y="599" width="1" height="1" fill="#808080"/><rect x="26" y="599" width="1" height="1" fill="#808080"/><rect x="28" y="599" width="1" height="1" fill="#808080"/><rect x="30" y="599" width="1" height="1" fill="#808080"/><rect x="32" y="599" width="1" height="1" fill="#808080"/><rect x="34" y="599" width="1" height="1" fill="#808080"/><rect x="22" y="621" width="1" height="1" fill="#808080"/><rect x="24" y="621" width="1" height="1" fill="#808080"/><rect x="26" y="621" width="1" height="1" fill="#808080"/><rect x="28" y="621" width="1" height="1" fill="#808080"/><rect x="30" y="621" width="1" height="1" fill="#808080"/><rect x="32" y="621" width="1" height="1" fill="#808080"/><rect x="34" y="621" width="1" height="1" fill="#808080"/><rect x="22" y="643" width="1" height="1" fill="#808080"/><rect x="24" y="643" width="1" height="1" fill="#808080"/><rect x="26" y="643" width="1" height="1" fill="#808080"/><rect x="28" y="643" width="1" height="1" fill="#808080"/><rect x="30" y="643" width="1" height="1" fill="#808080"/><rect x="32" y="643" width="1" height="1" fill="#808080"/><rect x="34" y="643" width="1" height="1" fill="#808080"/><rect x="22" y="665" width="1" height="1" fill="#808080"/><rect x="24" y="665" width="1" height="1" fill="#808080"/><rect x="26" y="665" width="1" height="1" fill="#808080"/><rect x="28" y="665" width="1" height="1" fill="#808080"/><rect x="30" y="665" width="1" height="1" fill="#808080"/><rect x="32" y="665" width="1" height="1" fill="#808080"/><rect x="34" y="665" width="1" height="1" fill="#808080"/><rect x="48" y="533" width="1" height="1" fill="#808080"/><rect x="50" y="533" width="1" height="1" fill="#808080"/><rect x="52" y="533" width="1" height="1" fill="#808080"/><rect x="54" y="533" width="1" height="1" fill="#808080"/><rect x="56" y="533" width="1" height="1" fill="#808080"/><rect x="58" y="533" width="1" height="1" fill="#808080"/><rect x="60" y="533" width="1" height="1" fill="#808080"/><rect x="15.5" y="506.5" width="10" height="10" rx="1" fill="#f0f0f0" stroke="#9a9a9a"/><rect x="17" y="511" width="7" height="1" fill="#2a4aa0"/><rect x="15.5" y="550.5" width="10" height="10" rx="1" fill="#f0f0f0" stroke="#9a9a9a"/><rect x="17" y="555" width="7" height="1" fill="#2a4aa0"/><rect x="20" y="552" width="1" height="7" fill="#2a4aa0"/><rect x="15.5" y="572.5" width="10" height="10" rx="1" fill="#f0f0f0" stroke="#9a9a9a"/><rect x="17" y="577" width="7" height="1" fill="#2a4aa0"/><rect x="20" y="574" width="1" height="7" fill="#2a4aa0"/><rect x="15.5" y="594.5" width="10" height="10" rx="1" fill="#f0f0f0" stroke="#9a9a9a"/><rect x="17" y="599" width="7" height="1" fill="#2a4aa0"/><rect x="20" y="596" width="1" height="7" fill="#2a4aa0"/><rect x="41.5" y="528.5" width="10" height="10" rx="1" fill="#f0f0f0" stroke="#9a9a9a"/><rect x="43" y="533" width="7" height="1" fill="#2a4aa0"/><rect x="46" y="530" width="1" height="7" fill="#2a4aa0"/><rect x="10" y="478" width="16.5" height="14.5" fill="#fff" stroke="#2a86e0" stroke-width="1"/><rect x="10" y="478" width="16.5" height="3" fill="#2a86e0"/><rect x="14.5" y="483" width="16" height="14.5" fill="#fff" stroke="#2a86e0" stroke-width="1"/><rect x="14.5" y="483" width="16" height="3.2" fill="#2a86e0"/><path d="M17 489 H28 M17 492 H28 M20 486.5 V496 M24 486.5 V496" stroke="#d8dce8" stroke-width="0.8"/><path d="M16.5 493 L19.5 489.5 L22 491.5 L25 488.5 L28.5 490" fill="none" stroke="#f06030" stroke-width="1.1"/><ellipse cx="42.5" cy="505" rx="4.5" ry="4.5" fill="#3aa020"/><path d="M36 517 Q36 509.5 42.5 509.5 Q49 509.5 49 517 Z" fill="#5ac030"/><ellipse cx="50" cy="509" rx="4.5" ry="4.5" fill="#3aa020"/><path d="M43.5 520 Q43.5 513 50 513 Q56.5 513 56.5 520 Z" fill="#6ad040"/><path d="M41 510 L43 515 L44 510 Z M48.5 514 L50.5 519 L51.5 514 Z" fill="#fff"/><path d="M64.5 524 L67.5 522.2 H78.5 V540 L75.5 541.8 H64.5 Z" fill="#2a8ae0"/><rect x="67.5" y="524" width="8" height="17.5" fill="#5ab4f5"/><rect x="69" y="527" width="5" height="1.3" fill="#e8f4ff"/><rect x="69" y="530" width="5" height="1.3" fill="#e8f4ff"/><circle cx="73.5" cy="537" r="0.9" fill="#f8d020"/><rect x="36.5" y="545.5" width="16" height="17" rx="2" fill="#f5c800" stroke="#c89a00"/><text x="44.5" y="559" font-size="13" font-style="italic" font-family="Liberation Serif" fill="#333" text-anchor="middle">f</text><path d="M37 569.5 L45.5 566 L54 569.5 L45.5 573 Z" fill="#3a3a3a"/><rect x="41" y="569.5" width="9" height="4" fill="#505050"/><ellipse cx="45.5" cy="576" rx="3.5" ry="3" fill="#e8b010"/><path d="M37 585 Q36.5 579 42 578.5 H49 Q53 580 52 585 Z" fill="#2a78d0"/><path d="M52 577.5 L56.5 581.5 L52 585.5 L47.5 581.5 Z" fill="#fff2a0" stroke="#c8a000" stroke-width="1"/><path d="M37.5 589 H51 Q54 589 53 592 V604 H40 Q37 604 37.5 601 Z" fill="#f5d040" stroke="#c89a00"/><path d="M41 593 H50 M41 596 H50 M41 599 H48" stroke="#fff3a0" stroke-width="1"/><path d="M52 599.5 L56.5 603.5 L52 607.5 L47.5 603.5 Z" fill="#fff2a0" stroke="#c8a000" stroke-width="1"/><circle cx="45" cy="618" r="6.5" fill="none" stroke="#2a78d0" stroke-width="3.4" stroke-dasharray="2.2,1.2"/><circle cx="45" cy="618" r="5.2" fill="#4a90e0"/><circle cx="45" cy="618" r="2.6" fill="#fff"/><circle cx="52.5" cy="626" r="3.2" fill="none" stroke="#2a68c0" stroke-width="2.2" stroke-dasharray="1.6,1"/><circle cx="52.5" cy="626" r="1.3" fill="#fff"/><path d="M43 636.5 V634.5 Q46.5 629.5 50 634.5 V636.5" fill="none" stroke="#9aa4b0" stroke-width="1.4"/><rect x="38.5" y="636" width="16" height="16" fill="#f5c800"/><path d="M41 649.5 V645.5 H43 V643.5 H45 V645.5 H48 V643.5 H50 V645.5 H52 V649.5 Z" fill="#1e6fc0"/><path d="M42 662 A6 6 0 0 1 52.5 660" fill="none" stroke="#2a78d0" stroke-width="1.5"/><path d="M40 666 A9 9 0 0 1 55 662" fill="none" stroke="#2a78d0" stroke-width="1.5"/><path d="M43 665 V675 M49.5 661 V673" stroke="#1cb01c" stroke-width="1.2"/><rect x="41.3" y="667" width="3.5" height="5" fill="#1cb01c"/><rect x="47.7" y="663" width="3.7" height="7" fill="#1cb01c"/></svg>
<div class="t" style="left:37.4px;top:481.23px;font-size:14.5px;font-weight:normal;color:#000">Axen</div>
<div class="t" style="left:63.4px;top:503.23px;font-size:14.5px;font-weight:normal;color:#000">Accounts</div>
<div class="t" style="left:89.4px;top:525.23px;font-size:14.5px;font-weight:bold;color:#000">AxenMarkets-Server</div>
<div class="t" style="left:63.4px;top:547.23px;font-size:14.5px;font-weight:normal;color:#000">Indicators</div>
<div class="t" style="left:63.4px;top:569.23px;font-size:14.5px;font-weight:normal;color:#000">Expert Advisors</div>
<div class="t" style="left:63.4px;top:591.23px;font-size:14.5px;font-weight:normal;color:#000">Scripts</div>
<div class="t" style="left:63.4px;top:613.23px;font-size:14.5px;font-weight:normal;color:#000">Services</div>
<div class="t" style="left:63.4px;top:635.23px;font-size:14.5px;font-weight:normal;color:#000">Market</div>
<div class="t" style="left:63.4px;top:657.23px;font-size:14.5px;font-weight:normal;color:#000">Signals</div>
<div class="r" style="left:5px;top:783px;width:298px;height:24px;background:#f0f0f0;"></div>
<div class="r" style="left:5px;top:782px;width:298px;height:1px;background:#000;"></div>
<div class="r" style="left:5px;top:783px;width:298px;height:1px;background:#d8d8d8;"></div>
<div class="r" style="left:8px;top:782px;width:86px;height:25px;background:#fff;border:1px solid #000;border-top:none;box-shadow:1px 1px 0 #b8b8b8"></div>
<div class="r" style="left:9px;top:782px;width:84px;height:2px;background:#fff;"></div>
<div class="t" style="left:21.5px;top:787.73px;font-size:14.5px;color:#000;font-weight:normal;">Common</div>
<div class="t" style="left:107px;top:787.73px;font-size:14.5px;color:#808080;font-weight:normal;">Favorites</div>
<div class="r" style="left:5px;top:476px;width:1px;height:333px;background:#a0a0a0;"></div>
<div class="r" style="left:312px;top:97px;width:1606px;height:691px;background:#ababab;"></div>
<div class="r" style="left:312px;top:97px;width:1606px;height:1px;background:#b0b0b0;"></div>
<div class="r" style="left:309px;top:96px;width:1609px;height:1px;background:#696969;"></div>
<div class="r" style="left:311px;top:97px;width:474px;height:295px;background:#ffffff;border:1px solid #686868"></div>
<svg class="s" style="left:322px;top:104px" width="20" height="21" viewBox="0 -1 20 21"><rect x="0.5" y="0.5" width="18" height="14" fill="#eef4fb" stroke="#8aaad0"/><rect x="1" y="1" width="17" height="2" fill="#b0cce8"/><path d="M4 13 V8 M7 11 V5 M11 9 V4 M15 10 V5" stroke="#909090" stroke-width="1"/><circle cx="7" cy="15.5" r="4.3" fill="#d0c040"/><circle cx="14" cy="16" r="4.3" fill="#2a88c0"/><circle cx="10.5" cy="10.5" r="4.6" fill="#58a848"/><circle cx="9" cy="14.5" r="1.1" fill="#f08040"/><circle cx="13.5" cy="14.5" r="1.1" fill="#f08040"/><circle cx="11" cy="11" r="1" fill="#f08040"/></svg>
<div class="t" style="left:347px;top:107.43px;font-size:14.5px;color:#000;letter-spacing:-0.5px">EURUSD,H1</div>
<svg class="s" style="left:662px;top:104px" width="122" height="26" viewBox="662 104 122 26"><rect x="669" y="117" width="11" height="3" fill="#000"/><rect x="710.5" y="109.5" width="11" height="11" fill="none" stroke="#000" stroke-width="2"/><path d="M753.5 109.5 L763.5 119.5 M763.5 109.5 L753.5 119.5" stroke="#000" stroke-width="2.6" stroke-linecap="round"/></svg>
<div class="r" style="left:317px;top:132px;width:460px;height:252px;background:#a0a0a0"></div>
<div class="r" style="left:318px;top:133px;width:459px;height:251px;background:#e8e8e8"></div>
<div class="r" style="left:318px;top:133px;width:458px;height:250px;background:#696969"></div>
<svg class="s" style="left:319px;top:134px" width="458" height="250" viewBox="319 134 458 250"><rect x="319" y="134" width="458" height="250" fill="#000"/><filter id="crisp" x="0" y="0" width="1" height="1"><feComponentTransfer><feFuncA type="linear" slope="12" intercept="-6"/></feComponentTransfer></filter><clipPath id="c31298"><rect x="322" y="137" width="385" height="229"/></clipPath><g shape-rendering="crispEdges"><line x1="322" y1="143.5" x2="707" y2="143.5" stroke="#778899" stroke-width="1" stroke-dasharray="3,3"/><line x1="322" y1="175.5" x2="707" y2="175.5" stroke="#778899" stroke-width="1" stroke-dasharray="3,3"/><line x1="322" y1="207.5" x2="707" y2="207.5" stroke="#778899" stroke-width="1" stroke-dasharray="3,3"/><line x1="322" y1="238.5" x2="707" y2="238.5" stroke="#778899" stroke-width="1" stroke-dasharray="3,3"/><line x1="322" y1="270.5" x2="707" y2="270.5" stroke="#778899" stroke-width="1" stroke-dasharray="3,3"/><line x1="322" y1="302.5" x2="707" y2="302.5" stroke="#778899" stroke-width="1" stroke-dasharray="3,3"/><line x1="322" y1="334.5" x2="707" y2="334.5" stroke="#778899" stroke-width="1" stroke-dasharray="3,3"/><line x1="353.5" y1="137" x2="353.5" y2="366" stroke="#778899" stroke-width="1" stroke-dasharray="3,3"/><line x1="385.5" y1="137" x2="385.5" y2="366" stroke="#778899" stroke-width="1" stroke-dasharray="3,3"/><line x1="417.5" y1="137" x2="417.5" y2="366" stroke="#778899" stroke-width="1" stroke-dasharray="3,3"/><line x1="449.5" y1="137" x2="449.5" y2="366" stroke="#778899" stroke-width="1" stroke-dasharray="3,3"/><line x1="481.5" y1="137" x2="481.5" y2="366" stroke="#778899" stroke-width="1" stroke-dasharray="3,3"/><line x1="513.5" y1="137" x2="513.5" y2="366" stroke="#778899" stroke-width="1" stroke-dasharray="3,3"/><line x1="545.5" y1="137" x2="545.5" y2="366" stroke="#778899" stroke-width="1" stroke-dasharray="3,3"/><line x1="577.5" y1="137" x2="577.5" y2="366" stroke="#778899" stroke-width="1" stroke-dasharray="3,3"/><line x1="609.5" y1="137" x2="609.5" y2="366" stroke="#778899" stroke-width="1" stroke-dasharray="3,3"/><line x1="641.5" y1="137" x2="641.5" y2="366" stroke="#778899" stroke-width="1" stroke-dasharray="3,3"/><line x1="673.5" y1="137" x2="673.5" y2="366" stroke="#778899" stroke-width="1" stroke-dasharray="3,3"/><line x1="705.5" y1="137" x2="705.5" y2="366" stroke="#778899" stroke-width="1" stroke-dasharray="3,3"/></g><rect x="322" y="226" width="385" height="1" fill="#778899"/><g clip-path="url(#c31298)"><rect x="322" y="153" width="1" height="130" fill="#00ff00"/><rect x="325" y="178" width="1" height="59" fill="#00ff00"/><rect x="324" y="196" width="3" height="32" fill="#00ff00"/><rect x="325" y="197" width="1" height="30" fill="#fff"/><rect x="329" y="198" width="1" height="21" fill="#00ff00"/><rect x="328" y="206" width="3" height="7" fill="#00ff00"/><rect x="329" y="207" width="1" height="5" fill="#000"/><rect x="333" y="197" width="1" height="54" fill="#00ff00"/><rect x="332" y="203" width="3" height="34" fill="#00ff00"/><rect x="333" y="204" width="1" height="32" fill="#000"/><rect x="337" y="219" width="1" height="18" fill="#00ff00"/><rect x="336" y="226" width="3" height="7" fill="#00ff00"/><rect x="337" y="227" width="1" height="5" fill="#fff"/><rect x="341" y="222" width="1" height="14" fill="#00ff00"/><rect x="340" y="228" width="3" height="3" fill="#00ff00"/><rect x="341" y="229" width="1" height="1" fill="#fff"/><rect x="345" y="224" width="1" height="16" fill="#00ff00"/><rect x="344" y="228" width="3" height="6" fill="#00ff00"/><rect x="345" y="229" width="1" height="4" fill="#000"/><rect x="349" y="219" width="1" height="16" fill="#00ff00"/><rect x="348" y="223" width="3" height="6" fill="#00ff00"/><rect x="349" y="224" width="1" height="4" fill="#000"/><rect x="353" y="220" width="1" height="48" fill="#00ff00"/><rect x="352" y="231" width="3" height="17" fill="#00ff00"/><rect x="353" y="232" width="1" height="15" fill="#fff"/><rect x="357" y="255" width="1" height="29" fill="#00ff00"/><rect x="356" y="260" width="3" height="17" fill="#00ff00"/><rect x="357" y="261" width="1" height="15" fill="#000"/><rect x="361" y="259" width="1" height="32" fill="#00ff00"/><rect x="360" y="267" width="3" height="20" fill="#00ff00"/><rect x="361" y="268" width="1" height="18" fill="#000"/><rect x="365" y="254" width="1" height="18" fill="#00ff00"/><rect x="364" y="259" width="3" height="7" fill="#00ff00"/><rect x="365" y="260" width="1" height="5" fill="#fff"/><rect x="369" y="265" width="1" height="12" fill="#00ff00"/><rect x="368" y="268" width="3" height="8" fill="#00ff00"/><rect x="369" y="269" width="1" height="6" fill="#000"/><rect x="373" y="268" width="1" height="9" fill="#00ff00"/><rect x="372" y="271" width="3" height="3" fill="#00ff00"/><rect x="373" y="272" width="1" height="1" fill="#fff"/><rect x="377" y="268" width="1" height="7" fill="#00ff00"/><rect x="376" y="270" width="3" height="4" fill="#00ff00"/><rect x="377" y="271" width="1" height="2" fill="#000"/><rect x="381" y="263" width="1" height="8" fill="#00ff00"/><rect x="380" y="265" width="3" height="5" fill="#00ff00"/><rect x="381" y="266" width="1" height="3" fill="#000"/><rect x="385" y="261" width="1" height="6" fill="#00ff00"/><rect x="384" y="264" width="3" height="1" fill="#00ff00"/><rect x="389" y="261" width="1" height="7" fill="#00ff00"/><rect x="388" y="264" width="3" height="3" fill="#00ff00"/><rect x="389" y="265" width="1" height="1" fill="#000"/><rect x="393" y="255" width="1" height="18" fill="#00ff00"/><rect x="392" y="257" width="3" height="14" fill="#00ff00"/><rect x="393" y="258" width="1" height="12" fill="#000"/><rect x="397" y="249" width="1" height="12" fill="#00ff00"/><rect x="396" y="253" width="3" height="5" fill="#00ff00"/><rect x="397" y="254" width="1" height="3" fill="#fff"/><rect x="401" y="245" width="1" height="8" fill="#00ff00"/><rect x="400" y="249" width="3" height="5" fill="#00ff00"/><rect x="401" y="250" width="1" height="3" fill="#fff"/><rect x="405" y="251" width="1" height="13" fill="#00ff00"/><rect x="404" y="254" width="3" height="6" fill="#00ff00"/><rect x="405" y="255" width="1" height="4" fill="#fff"/><rect x="409" y="259" width="1" height="17" fill="#00ff00"/><rect x="408" y="265" width="3" height="5" fill="#00ff00"/><rect x="409" y="266" width="1" height="3" fill="#fff"/><rect x="413" y="269" width="1" height="26" fill="#00ff00"/><rect x="412" y="275" width="3" height="13" fill="#00ff00"/><rect x="413" y="276" width="1" height="11" fill="#fff"/><rect x="417" y="263" width="1" height="36" fill="#00ff00"/><rect x="416" y="272" width="3" height="16" fill="#00ff00"/><rect x="417" y="273" width="1" height="14" fill="#fff"/><rect x="421" y="256" width="1" height="12" fill="#00ff00"/><rect x="420" y="260" width="3" height="6" fill="#00ff00"/><rect x="421" y="261" width="1" height="4" fill="#000"/><rect x="425" y="253" width="1" height="13" fill="#00ff00"/><rect x="424" y="255" width="3" height="10" fill="#00ff00"/><rect x="425" y="256" width="1" height="8" fill="#fff"/><rect x="429" y="253" width="1" height="12" fill="#00ff00"/><rect x="428" y="258" width="3" height="6" fill="#00ff00"/><rect x="429" y="259" width="1" height="4" fill="#fff"/><rect x="433" y="255" width="1" height="11" fill="#00ff00"/><rect x="432" y="258" width="3" height="5" fill="#00ff00"/><rect x="433" y="259" width="1" height="3" fill="#000"/><rect x="437" y="264" width="1" height="34" fill="#00ff00"/><rect x="436" y="279" width="3" height="14" fill="#00ff00"/><rect x="437" y="280" width="1" height="12" fill="#000"/><rect x="441" y="288" width="1" height="42" fill="#00ff00"/><rect x="440" y="299" width="3" height="23" fill="#00ff00"/><rect x="441" y="300" width="1" height="21" fill="#fff"/><rect x="445" y="320" width="1" height="30" fill="#00ff00"/><rect x="444" y="323" width="3" height="17" fill="#00ff00"/><rect x="445" y="324" width="1" height="15" fill="#fff"/><rect x="449" y="320" width="1" height="26" fill="#00ff00"/><rect x="448" y="323" width="3" height="14" fill="#00ff00"/><rect x="449" y="324" width="1" height="12" fill="#000"/><rect x="453" y="315" width="1" height="15" fill="#00ff00"/><rect x="452" y="320" width="3" height="5" fill="#00ff00"/><rect x="453" y="321" width="1" height="3" fill="#fff"/><rect x="457" y="310" width="1" height="15" fill="#00ff00"/><rect x="456" y="314" width="3" height="7" fill="#00ff00"/><rect x="457" y="315" width="1" height="5" fill="#000"/><rect x="461" y="312" width="1" height="12" fill="#00ff00"/><rect x="460" y="316" width="3" height="6" fill="#00ff00"/><rect x="461" y="317" width="1" height="4" fill="#fff"/><rect x="465" y="317" width="1" height="17" fill="#00ff00"/><rect x="464" y="321" width="3" height="9" fill="#00ff00"/><rect x="465" y="322" width="1" height="7" fill="#fff"/><rect x="469" y="326" width="1" height="11" fill="#00ff00"/><rect x="468" y="329" width="3" height="6" fill="#00ff00"/><rect x="469" y="330" width="1" height="4" fill="#000"/><rect x="473" y="321" width="1" height="13" fill="#00ff00"/><rect x="472" y="327" width="3" height="1" fill="#00ff00"/><rect x="477" y="320" width="1" height="9" fill="#00ff00"/><rect x="476" y="322" width="3" height="7" fill="#00ff00"/><rect x="477" y="323" width="1" height="5" fill="#000"/><rect x="481" y="318" width="1" height="21" fill="#00ff00"/><rect x="480" y="321" width="3" height="11" fill="#00ff00"/><rect x="481" y="322" width="1" height="9" fill="#000"/><rect x="485" y="326" width="1" height="12" fill="#00ff00"/><rect x="484" y="331" width="3" height="4" fill="#00ff00"/><rect x="485" y="332" width="1" height="2" fill="#fff"/><rect x="489" y="327" width="1" height="25" fill="#00ff00"/><rect x="488" y="334" width="3" height="14" fill="#00ff00"/><rect x="489" y="335" width="1" height="12" fill="#fff"/><rect x="493" y="331" width="1" height="19" fill="#00ff00"/><rect x="492" y="336" width="3" height="8" fill="#00ff00"/><rect x="493" y="337" width="1" height="6" fill="#fff"/><rect x="497" y="326" width="1" height="11" fill="#00ff00"/><rect x="496" y="328" width="3" height="7" fill="#00ff00"/><rect x="497" y="329" width="1" height="5" fill="#fff"/><rect x="501" y="303" width="1" height="33" fill="#00ff00"/><rect x="500" y="315" width="3" height="12" fill="#00ff00"/><rect x="501" y="316" width="1" height="10" fill="#fff"/><rect x="505" y="300" width="1" height="22" fill="#00ff00"/><rect x="504" y="309" width="3" height="10" fill="#00ff00"/><rect x="505" y="310" width="1" height="8" fill="#fff"/><rect x="509" y="295" width="1" height="18" fill="#00ff00"/><rect x="508" y="299" width="3" height="12" fill="#00ff00"/><rect x="509" y="300" width="1" height="10" fill="#fff"/><rect x="513" y="281" width="1" height="24" fill="#00ff00"/><rect x="512" y="285" width="3" height="13" fill="#00ff00"/><rect x="513" y="286" width="1" height="11" fill="#000"/><rect x="517" y="281" width="1" height="9" fill="#00ff00"/><rect x="516" y="284" width="3" height="5" fill="#00ff00"/><rect x="517" y="285" width="1" height="3" fill="#000"/><rect x="521" y="283" width="1" height="12" fill="#00ff00"/><rect x="520" y="285" width="3" height="9" fill="#00ff00"/><rect x="521" y="286" width="1" height="7" fill="#fff"/><rect x="525" y="286" width="1" height="13" fill="#00ff00"/><rect x="524" y="289" width="3" height="7" fill="#00ff00"/><rect x="525" y="290" width="1" height="5" fill="#fff"/><rect x="529" y="260" width="1" height="48" fill="#00ff00"/><rect x="528" y="281" width="3" height="8" fill="#00ff00"/><rect x="529" y="282" width="1" height="6" fill="#000"/><rect x="533" y="261" width="1" height="10" fill="#00ff00"/><rect x="532" y="263" width="3" height="5" fill="#00ff00"/><rect x="533" y="264" width="1" height="3" fill="#000"/><rect x="537" y="262" width="1" height="9" fill="#00ff00"/><rect x="536" y="265" width="3" height="3" fill="#00ff00"/><rect x="537" y="266" width="1" height="1" fill="#000"/><rect x="541" y="254" width="1" height="18" fill="#00ff00"/><rect x="540" y="256" width="3" height="15" fill="#00ff00"/><rect x="541" y="257" width="1" height="13" fill="#000"/><rect x="545" y="248" width="1" height="14" fill="#00ff00"/><rect x="544" y="251" width="3" height="7" fill="#00ff00"/><rect x="545" y="252" width="1" height="5" fill="#fff"/><rect x="549" y="255" width="1" height="15" fill="#00ff00"/><rect x="548" y="260" width="3" height="8" fill="#00ff00"/><rect x="549" y="261" width="1" height="6" fill="#fff"/><rect x="553" y="251" width="1" height="22" fill="#00ff00"/><rect x="552" y="260" width="3" height="10" fill="#00ff00"/><rect x="553" y="261" width="1" height="8" fill="#fff"/><rect x="557" y="247" width="1" height="16" fill="#00ff00"/><rect x="556" y="249" width="3" height="9" fill="#00ff00"/><rect x="557" y="250" width="1" height="7" fill="#fff"/><rect x="561" y="249" width="1" height="12" fill="#00ff00"/><rect x="560" y="252" width="3" height="5" fill="#00ff00"/><rect x="561" y="253" width="1" height="3" fill="#fff"/><rect x="565" y="251" width="1" height="9" fill="#00ff00"/><rect x="564" y="253" width="3" height="4" fill="#00ff00"/><rect x="565" y="254" width="1" height="2" fill="#fff"/><rect x="569" y="255" width="1" height="13" fill="#00ff00"/><rect x="568" y="257" width="3" height="9" fill="#00ff00"/><rect x="569" y="258" width="1" height="7" fill="#fff"/><rect x="573" y="260" width="1" height="10" fill="#00ff00"/><rect x="572" y="265" width="3" height="3" fill="#00ff00"/><rect x="573" y="266" width="1" height="1" fill="#000"/><rect x="577" y="265" width="1" height="12" fill="#00ff00"/><rect x="576" y="269" width="3" height="4" fill="#00ff00"/><rect x="577" y="270" width="1" height="2" fill="#fff"/><rect x="581" y="260" width="1" height="17" fill="#00ff00"/><rect x="580" y="264" width="3" height="12" fill="#00ff00"/><rect x="581" y="265" width="1" height="10" fill="#000"/><rect x="585" y="259" width="1" height="11" fill="#00ff00"/><rect x="584" y="262" width="3" height="4" fill="#00ff00"/><rect x="585" y="263" width="1" height="2" fill="#fff"/><rect x="589" y="261" width="1" height="21" fill="#00ff00"/><rect x="588" y="269" width="3" height="11" fill="#00ff00"/><rect x="589" y="270" width="1" height="9" fill="#fff"/><rect x="593" y="275" width="1" height="17" fill="#00ff00"/><rect x="592" y="277" width="3" height="8" fill="#00ff00"/><rect x="593" y="278" width="1" height="6" fill="#000"/><rect x="597" y="279" width="1" height="17" fill="#00ff00"/><rect x="596" y="284" width="3" height="9" fill="#00ff00"/><rect x="597" y="285" width="1" height="7" fill="#fff"/><rect x="601" y="272" width="1" height="13" fill="#00ff00"/><rect x="600" y="277" width="3" height="6" fill="#00ff00"/><rect x="601" y="278" width="1" height="4" fill="#fff"/><rect x="605" y="275" width="1" height="17" fill="#00ff00"/><rect x="604" y="282" width="3" height="7" fill="#00ff00"/><rect x="605" y="283" width="1" height="5" fill="#fff"/><rect x="609" y="282" width="1" height="26" fill="#00ff00"/><rect x="608" y="289" width="3" height="8" fill="#00ff00"/><rect x="609" y="290" width="1" height="6" fill="#fff"/><rect x="613" y="286" width="1" height="24" fill="#00ff00"/><rect x="612" y="289" width="3" height="15" fill="#00ff00"/><rect x="613" y="290" width="1" height="13" fill="#000"/><rect x="617" y="286" width="1" height="12" fill="#00ff00"/><rect x="616" y="289" width="3" height="6" fill="#00ff00"/><rect x="617" y="290" width="1" height="4" fill="#fff"/><rect x="621" y="285" width="1" height="15" fill="#00ff00"/><rect x="620" y="291" width="3" height="5" fill="#00ff00"/><rect x="621" y="292" width="1" height="3" fill="#fff"/><rect x="625" y="275" width="1" height="21" fill="#00ff00"/><rect x="624" y="282" width="3" height="7" fill="#00ff00"/><rect x="625" y="283" width="1" height="5" fill="#000"/><rect x="629" y="275" width="1" height="11" fill="#00ff00"/><rect x="628" y="276" width="3" height="9" fill="#00ff00"/><rect x="629" y="277" width="1" height="7" fill="#000"/><rect x="633" y="263" width="1" height="24" fill="#00ff00"/><rect x="632" y="271" width="3" height="10" fill="#00ff00"/><rect x="633" y="272" width="1" height="8" fill="#fff"/><rect x="637" y="229" width="1" height="43" fill="#00ff00"/><rect x="636" y="246" width="3" height="22" fill="#00ff00"/><rect x="637" y="247" width="1" height="20" fill="#000"/><rect x="641" y="223" width="1" height="21" fill="#00ff00"/><rect x="640" y="227" width="3" height="10" fill="#00ff00"/><rect x="641" y="228" width="1" height="8" fill="#000"/><rect x="645" y="225" width="1" height="9" fill="#00ff00"/><rect x="644" y="229" width="3" height="4" fill="#00ff00"/><rect x="645" y="230" width="1" height="2" fill="#000"/><rect x="649" y="208" width="1" height="22" fill="#00ff00"/><rect x="648" y="214" width="3" height="10" fill="#00ff00"/><rect x="649" y="215" width="1" height="8" fill="#000"/><rect x="653" y="209" width="1" height="23" fill="#00ff00"/><rect x="652" y="214" width="3" height="11" fill="#00ff00"/><rect x="653" y="215" width="1" height="9" fill="#fff"/><rect x="657" y="217" width="1" height="11" fill="#00ff00"/><rect x="656" y="219" width="3" height="6" fill="#00ff00"/><rect x="657" y="220" width="1" height="4" fill="#fff"/><rect x="661" y="219" width="1" height="13" fill="#00ff00"/><rect x="660" y="222" width="3" height="9" fill="#00ff00"/><rect x="661" y="223" width="1" height="7" fill="#000"/><rect x="665" y="220" width="1" height="12" fill="#00ff00"/><rect x="664" y="223" width="3" height="7" fill="#00ff00"/><rect x="665" y="224" width="1" height="5" fill="#000"/><rect x="669" y="227" width="1" height="9" fill="#00ff00"/><rect x="668" y="230" width="3" height="6" fill="#00ff00"/><rect x="669" y="231" width="1" height="4" fill="#fff"/><rect x="673" y="230" width="1" height="16" fill="#00ff00"/><rect x="672" y="235" width="3" height="5" fill="#00ff00"/><rect x="673" y="236" width="1" height="3" fill="#fff"/><rect x="677" y="238" width="1" height="17" fill="#00ff00"/><rect x="676" y="240" width="3" height="10" fill="#00ff00"/><rect x="677" y="241" width="1" height="8" fill="#fff"/><rect x="681" y="245" width="1" height="7" fill="#00ff00"/><rect x="680" y="246" width="3" height="5" fill="#00ff00"/><rect x="681" y="247" width="1" height="3" fill="#fff"/><rect x="685" y="246" width="1" height="10" fill="#00ff00"/><rect x="684" y="250" width="3" height="4" fill="#00ff00"/><rect x="685" y="251" width="1" height="2" fill="#fff"/><rect x="689" y="241" width="1" height="19" fill="#00ff00"/><rect x="688" y="247" width="3" height="6" fill="#00ff00"/><rect x="689" y="248" width="1" height="4" fill="#fff"/><rect x="693" y="238" width="1" height="15" fill="#00ff00"/><rect x="692" y="243" width="3" height="5" fill="#00ff00"/><rect x="693" y="244" width="1" height="3" fill="#000"/><rect x="697" y="225" width="1" height="21" fill="#00ff00"/><rect x="696" y="228" width="3" height="15" fill="#00ff00"/><rect x="697" y="229" width="1" height="13" fill="#000"/><rect x="701" y="216" width="1" height="18" fill="#00ff00"/><rect x="700" y="222" width="3" height="6" fill="#00ff00"/><rect x="701" y="223" width="1" height="4" fill="#000"/><rect x="705" y="215" width="1" height="18" fill="#00ff00"/><rect x="704" y="217" width="3" height="14" fill="#00ff00"/><rect x="705" y="218" width="1" height="12" fill="#000"/><polyline points="322.2,142.7 323.2,144.1 324.4,145.8 325.9,147.8 327.5,150.2 329.3,152.7 331.2,155.4 333.1,158.2 335.0,161.1 336.9,164.0 338.9,167.0 341.0,170.1 343.1,173.3 345.3,176.8 347.5,180.6 349.7,184.8 351.9,189.4 354.2,194.8 356.5,201.1 358.9,207.8 361.2,214.9 363.6,221.8 365.9,228.3 368.2,234.1 370.3,238.9 372.4,242.6 374.3,245.6 376.2,247.9 378.0,249.8 379.9,251.4 381.8,252.8 383.8,254.3 385.9,255.9 388.2,257.6 390.7,259.4 393.3,261.0 395.9,262.6 398.5,264.0 401.0,265.3 403.5,266.4 405.7,267.2 407.7,267.8 409.7,268.1 411.5,268.2 413.2,268.1 414.9,267.9 416.5,267.7 418.2,267.4 419.8,267.2 421.5,266.9 423.1,266.3 424.7,265.6 426.3,264.9 427.9,264.3 429.4,264.0 431.0,263.9 432.6,264.4 434.1,265.3 435.6,266.5 437.0,268.1 438.5,269.9 440.0,271.9 441.6,274.1 443.4,276.3 445.3,278.5 447.5,280.8 449.8,283.4 452.3,286.0 454.9,288.8 457.6,291.6 460.2,294.4 462.7,297.1 465.1,299.7 467.4,302.3 469.6,305.0 471.9,307.6 474.0,310.3 476.1,312.8 478.2,315.2 480.2,317.5 482.1,319.5 483.8,321.5 485.5,323.4 487.0,325.2 488.5,326.9 490.0,328.3 491.5,329.5 493.1,330.4 494.8,330.8 496.6,330.9 498.5,330.5 500.4,329.8 502.3,328.8 504.3,327.7 506.3,326.4 508.3,325.1 510.4,323.8 512.4,322.5 514.4,321.2 516.5,319.7 518.6,318.2 520.7,316.6 522.8,314.9 524.9,313.0 527.0,311.0 529.1,308.9 531.2,306.6 533.2,304.2 535.3,301.7 537.5,299.1 539.6,296.5 541.8,293.8 543.9,291.2 546.2,288.6 548.4,285.7 550.6,282.8 552.9,279.8 555.2,277.0 557.5,274.4 559.9,272.0 562.3,270.0 564.9,268.4 567.5,267.0 570.3,265.8 573.0,264.8 575.8,264.1 578.5,263.5 581.1,263.1 583.6,263.0 585.9,263.0 588.1,263.4 590.2,264.0 592.3,264.7 594.3,265.6 596.4,266.6 598.4,267.6 600.5,268.6 602.7,269.7 604.8,270.9 607.0,272.3 609.2,273.7 611.3,275.0 613.5,276.3 615.5,277.5 617.5,278.5 619.4,279.4 621.3,280.3 623.1,281.1 624.9,281.8 626.7,282.3 628.4,282.7 630.0,282.9 631.6,282.8 633.1,282.4 634.5,281.8 635.7,280.9 636.9,279.9 638.2,278.7 639.6,277.4 641.2,275.9 643.0,274.3 645.0,272.4 647.4,270.4 649.9,268.1 652.5,265.7 655.2,263.2 657.8,260.7 660.4,258.3 662.8,255.9 665.1,253.5 667.4,250.9 669.6,248.3 671.9,245.7 674.0,243.3 676.1,241.0 678.0,239.1 679.7,237.5 681.3,236.4 682.7,235.6 683.9,235.2 685.1,234.9 686.2,234.8 687.3,234.8 688.4,234.8 689.6,234.7 691.0,234.5 692.5,234.5 694.0,234.5 695.5,234.5 696.9,234.5 698.2,234.6 699.3,234.6 700.1,234.7" fill="none" stroke="#ff0000" stroke-width="1" shape-rendering="crispEdges"/></g><rect x="321.5" y="136.5" width="386" height="230" fill="none" stroke="#fff" stroke-width="1" shape-rendering="crispEdges"/><rect x="707" y="144" width="5" height="1" fill="#fff"/><text x="712.5" y="148.0" fill="#fff" font-size="12" text-anchor="start" font-family="Liberation Sans" filter="url(#crisp)" letter-spacing="0.3">1.19935</text><rect x="707" y="176" width="5" height="1" fill="#fff"/><text x="712.5" y="180.0" fill="#fff" font-size="12" text-anchor="start" font-family="Liberation Sans" filter="url(#crisp)" letter-spacing="0.3">1.19720</text><rect x="707" y="206" width="5" height="1" fill="#fff"/><text x="712.5" y="211.0" fill="#fff" font-size="12" text-anchor="start" font-family="Liberation Sans" filter="url(#crisp)" letter-spacing="0.3">1.19505</text><rect x="707" y="238" width="5" height="1" fill="#fff"/><text x="712.5" y="243.0" fill="#fff" font-size="12" text-anchor="start" font-family="Liberation Sans" filter="url(#crisp)" letter-spacing="0.3">1.19290</text><rect x="707" y="270" width="5" height="1" fill="#fff"/><text x="712.5" y="275.0" fill="#fff" font-size="12" text-anchor="start" font-family="Liberation Sans" filter="url(#crisp)" letter-spacing="0.3">1.19075</text><rect x="707" y="302" width="5" height="1" fill="#fff"/><text x="712.5" y="307.0" fill="#fff" font-size="12" text-anchor="start" font-family="Liberation Sans" filter="url(#crisp)" letter-spacing="0.3">1.18860</text><rect x="707" y="334" width="5" height="1" fill="#fff"/><text x="712.5" y="338.5" fill="#fff" font-size="12" text-anchor="start" font-family="Liberation Sans" filter="url(#crisp)" letter-spacing="0.3">1.18645</text><rect x="710" y="220" width="54" height="13" fill="#778899"/><text x="713" y="230.5" fill="#0a0a0a" font-size="12" text-anchor="start" font-family="Liberation Sans"  letter-spacing="0.3">1.19373</text><rect x="321" y="366" width="1" height="5" fill="#fff"/><text x="321.5" y="381.5" fill="#fff" font-size="12" text-anchor="start" font-family="Liberation Sans" filter="url(#crisp)" letter-spacing="0.15">17 Jun 2021</text><rect x="449" y="366" width="1" height="5" fill="#fff"/><text x="449.5" y="381.5" fill="#fff" font-size="12" text-anchor="start" font-family="Liberation Sans" filter="url(#crisp)" letter-spacing="0.15">18 Jun 16:00</text><rect x="577" y="366" width="1" height="5" fill="#fff"/><text x="577.5" y="381.5" fill="#fff" font-size="12" text-anchor="start" font-family="Liberation Sans" filter="url(#crisp)" letter-spacing="0.15">22 Jun 02:00</text><rect x="326" y="141" width="17" height="14" rx="2" fill="#f4f4fb" stroke="#c8c8e0" stroke-width="1"/><rect x="327" y="142" width="15" height="3" fill="#8a8af0"/><rect x="328" y="146" width="6" height="8" fill="#f08a8a"/><rect x="335" y="146" width="6" height="8" fill="#8a8af5"/><rect x="328" y="148" width="6" height="1" fill="#fbdede"/><rect x="328" y="151" width="6" height="1" fill="#fbdede"/><rect x="335" y="148" width="6" height="1" fill="#dedefb"/><rect x="335" y="151" width="6" height="1" fill="#dedefb"/><text x="352.5" y="154" fill="#fff" font-size="12" text-anchor="start" font-family="Liberation Sans" filter="url(#crisp)" letter-spacing="-0.25">EURUSD, H1:&#160; Euro vs US Dollar</text></svg>
<div class="r" style="left:785px;top:97px;width:474px;height:295px;background:#f0f0f0;border:1px solid #686868"></div>
<svg class="s" style="left:796px;top:104px" width="20" height="21" viewBox="0 -1 20 21"><rect x="0.5" y="0.5" width="18" height="14" fill="#eef4fb" stroke="#8aaad0"/><rect x="1" y="1" width="17" height="2" fill="#b0cce8"/><path d="M4 13 V8 M7 11 V5 M11 9 V4 M15 10 V5" stroke="#909090" stroke-width="1"/><circle cx="7" cy="15.5" r="4.3" fill="#d0c040"/><circle cx="14" cy="16" r="4.3" fill="#2a88c0"/><circle cx="10.5" cy="10.5" r="4.6" fill="#58a848"/><circle cx="9" cy="14.5" r="1.1" fill="#f08040"/><circle cx="13.5" cy="14.5" r="1.1" fill="#f08040"/><circle cx="11" cy="11" r="1" fill="#f08040"/></svg>
<div class="t" style="left:821px;top:107.43px;font-size:14.5px;color:#808080;letter-spacing:-0.5px">GBPUSD,H1</div>
<svg class="s" style="left:1136px;top:104px" width="122" height="26" viewBox="1136 104 122 26"><rect x="1143" y="117" width="11" height="3" fill="#a8a8a8"/><rect x="1184.5" y="109.5" width="11" height="11" fill="none" stroke="#a8a8a8" stroke-width="2"/><path d="M1227.5 109.5 L1237.5 119.5 M1237.5 109.5 L1227.5 119.5" stroke="#a8a8a8" stroke-width="2.6" stroke-linecap="round"/></svg>
<div class="r" style="left:791px;top:132px;width:460px;height:252px;background:#a0a0a0"></div>
<div class="r" style="left:792px;top:133px;width:459px;height:251px;background:#e8e8e8"></div>
<div class="r" style="left:792px;top:133px;width:458px;height:250px;background:#696969"></div>
<svg class="s" style="left:793px;top:134px" width="458" height="250" viewBox="793 134 458 250"><rect x="793" y="134" width="458" height="250" fill="#000"/><clipPath id="c78698"><rect x="796" y="137" width="385" height="151"/><rect x="796" y="291" width="385" height="75"/></clipPath><g shape-rendering="crispEdges"><line x1="796" y1="159.5" x2="1181" y2="159.5" stroke="#778899" stroke-width="1" stroke-dasharray="3,3"/><line x1="796" y1="191.5" x2="1181" y2="191.5" stroke="#778899" stroke-width="1" stroke-dasharray="3,3"/><line x1="796" y1="224.5" x2="1181" y2="224.5" stroke="#778899" stroke-width="1" stroke-dasharray="3,3"/><line x1="796" y1="256.5" x2="1181" y2="256.5" stroke="#778899" stroke-width="1" stroke-dasharray="3,3"/><line x1="827.5" y1="137" x2="827.5" y2="288" stroke="#778899" stroke-width="1" stroke-dasharray="3,3"/><line x1="859.5" y1="137" x2="859.5" y2="288" stroke="#778899" stroke-width="1" stroke-dasharray="3,3"/><line x1="891.5" y1="137" x2="891.5" y2="288" stroke="#778899" stroke-width="1" stroke-dasharray="3,3"/><line x1="923.5" y1="137" x2="923.5" y2="288" stroke="#778899" stroke-width="1" stroke-dasharray="3,3"/><line x1="955.5" y1="137" x2="955.5" y2="288" stroke="#778899" stroke-width="1" stroke-dasharray="3,3"/><line x1="987.5" y1="137" x2="987.5" y2="288" stroke="#778899" stroke-width="1" stroke-dasharray="3,3"/><line x1="1019.5" y1="137" x2="1019.5" y2="288" stroke="#778899" stroke-width="1" stroke-dasharray="3,3"/><line x1="1051.5" y1="137" x2="1051.5" y2="288" stroke="#778899" stroke-width="1" stroke-dasharray="3,3"/><line x1="1083.5" y1="137" x2="1083.5" y2="288" stroke="#778899" stroke-width="1" stroke-dasharray="3,3"/><line x1="1115.5" y1="137" x2="1115.5" y2="288" stroke="#778899" stroke-width="1" stroke-dasharray="3,3"/><line x1="1147.5" y1="137" x2="1147.5" y2="288" stroke="#778899" stroke-width="1" stroke-dasharray="3,3"/><line x1="1179.5" y1="137" x2="1179.5" y2="288" stroke="#778899" stroke-width="1" stroke-dasharray="3,3"/><line x1="796" y1="318.5" x2="1181" y2="318.5" stroke="#778899" stroke-width="1" stroke-dasharray="3,3"/><line x1="796" y1="332.5" x2="1181" y2="332.5" stroke="#778899" stroke-width="1" stroke-dasharray="3,3"/><line x1="796" y1="346.5" x2="1181" y2="346.5" stroke="#778899" stroke-width="1" stroke-dasharray="3,3"/><line x1="827.5" y1="291" x2="827.5" y2="366" stroke="#778899" stroke-width="1" stroke-dasharray="3,3"/><line x1="859.5" y1="291" x2="859.5" y2="366" stroke="#778899" stroke-width="1" stroke-dasharray="3,3"/><line x1="891.5" y1="291" x2="891.5" y2="366" stroke="#778899" stroke-width="1" stroke-dasharray="3,3"/><line x1="923.5" y1="291" x2="923.5" y2="366" stroke="#778899" stroke-width="1" stroke-dasharray="3,3"/><line x1="955.5" y1="291" x2="955.5" y2="366" stroke="#778899" stroke-width="1" stroke-dasharray="3,3"/><line x1="987.5" y1="291" x2="987.5" y2="366" stroke="#778899" stroke-width="1" stroke-dasharray="3,3"/><line x1="1019.5" y1="291" x2="1019.5" y2="366" stroke="#778899" stroke-width="1" stroke-dasharray="3,3"/><line x1="1051.5" y1="291" x2="1051.5" y2="366" stroke="#778899" stroke-width="1" stroke-dasharray="3,3"/><line x1="1083.5" y1="291" x2="1083.5" y2="366" stroke="#778899" stroke-width="1" stroke-dasharray="3,3"/><line x1="1115.5" y1="291" x2="1115.5" y2="366" stroke="#778899" stroke-width="1" stroke-dasharray="3,3"/><line x1="1147.5" y1="291" x2="1147.5" y2="366" stroke="#778899" stroke-width="1" stroke-dasharray="3,3"/><line x1="1179.5" y1="291" x2="1179.5" y2="366" stroke="#778899" stroke-width="1" stroke-dasharray="3,3"/></g><rect x="796" y="167" width="385" height="1" fill="#778899"/><g clip-path="url(#c78698)"><rect x="795" y="252" width="1" height="28" fill="#00ff00"/><rect x="793" y="254" width="5" height="26" fill="#00ff00"/><rect x="794" y="255" width="3" height="24" fill="#000"/><rect x="803" y="239" width="1" height="24" fill="#00ff00"/><rect x="801" y="247" width="5" height="8" fill="#00ff00"/><rect x="802" y="248" width="3" height="6" fill="#000"/><rect x="811" y="239" width="1" height="16" fill="#00ff00"/><rect x="809" y="247" width="5" height="1" fill="#00ff00"/><rect x="819" y="244" width="1" height="13" fill="#00ff00"/><rect x="817" y="247" width="5" height="4" fill="#00ff00"/><rect x="818" y="248" width="3" height="2" fill="#fff"/><rect x="827" y="226" width="1" height="26" fill="#00ff00"/><rect x="825" y="228" width="5" height="24" fill="#00ff00"/><rect x="826" y="229" width="3" height="22" fill="#000"/><rect x="835" y="209" width="1" height="23" fill="#00ff00"/><rect x="833" y="224" width="5" height="5" fill="#00ff00"/><rect x="834" y="225" width="3" height="3" fill="#000"/><rect x="843" y="211" width="1" height="15" fill="#00ff00"/><rect x="841" y="214" width="5" height="11" fill="#00ff00"/><rect x="842" y="215" width="3" height="9" fill="#000"/><rect x="851" y="198" width="1" height="18" fill="#00ff00"/><rect x="849" y="202" width="5" height="14" fill="#00ff00"/><rect x="850" y="203" width="3" height="12" fill="#000"/><rect x="859" y="196" width="1" height="9" fill="#00ff00"/><rect x="857" y="200" width="5" height="1" fill="#00ff00"/><rect x="867" y="195" width="1" height="8" fill="#00ff00"/><rect x="865" y="200" width="5" height="1" fill="#00ff00"/><rect x="875" y="194" width="1" height="8" fill="#00ff00"/><rect x="873" y="198" width="5" height="4" fill="#00ff00"/><rect x="874" y="199" width="3" height="2" fill="#000"/><rect x="883" y="193" width="1" height="10" fill="#00ff00"/><rect x="881" y="197" width="5" height="1" fill="#00ff00"/><rect x="891" y="192" width="1" height="6" fill="#00ff00"/><rect x="889" y="193" width="5" height="5" fill="#00ff00"/><rect x="890" y="194" width="3" height="3" fill="#000"/><rect x="899" y="193" width="1" height="9" fill="#00ff00"/><rect x="897" y="194" width="5" height="8" fill="#00ff00"/><rect x="898" y="195" width="3" height="6" fill="#fff"/><rect x="907" y="198" width="1" height="8" fill="#00ff00"/><rect x="905" y="200" width="5" height="6" fill="#00ff00"/><rect x="906" y="201" width="3" height="4" fill="#fff"/><rect x="915" y="204" width="1" height="16" fill="#00ff00"/><rect x="913" y="205" width="5" height="12" fill="#00ff00"/><rect x="914" y="206" width="3" height="10" fill="#fff"/><rect x="923" y="214" width="1" height="14" fill="#00ff00"/><rect x="921" y="216" width="5" height="3" fill="#00ff00"/><rect x="922" y="217" width="3" height="1" fill="#fff"/><rect x="931" y="210" width="1" height="11" fill="#00ff00"/><rect x="929" y="213" width="5" height="6" fill="#00ff00"/><rect x="930" y="214" width="3" height="4" fill="#000"/><rect x="939" y="208" width="1" height="8" fill="#00ff00"/><rect x="937" y="214" width="5" height="1" fill="#00ff00"/><rect x="947" y="211" width="1" height="7" fill="#00ff00"/><rect x="945" y="215" width="5" height="4" fill="#00ff00"/><rect x="946" y="216" width="3" height="2" fill="#fff"/><rect x="955" y="216" width="1" height="19" fill="#00ff00"/><rect x="953" y="218" width="5" height="16" fill="#00ff00"/><rect x="954" y="219" width="3" height="14" fill="#fff"/><rect x="963" y="217" width="1" height="16" fill="#00ff00"/><rect x="961" y="226" width="5" height="8" fill="#00ff00"/><rect x="962" y="227" width="3" height="6" fill="#000"/><rect x="971" y="221" width="1" height="26" fill="#00ff00"/><rect x="969" y="225" width="5" height="16" fill="#00ff00"/><rect x="970" y="226" width="3" height="14" fill="#fff"/><rect x="979" y="238" width="1" height="19" fill="#00ff00"/><rect x="977" y="241" width="5" height="16" fill="#00ff00"/><rect x="978" y="242" width="3" height="14" fill="#fff"/><rect x="987" y="245" width="1" height="19" fill="#00ff00"/><rect x="985" y="252" width="5" height="5" fill="#00ff00"/><rect x="986" y="253" width="3" height="3" fill="#000"/><rect x="995" y="238" width="1" height="16" fill="#00ff00"/><rect x="993" y="247" width="5" height="6" fill="#00ff00"/><rect x="994" y="248" width="3" height="4" fill="#000"/><rect x="1003" y="220" width="1" height="28" fill="#00ff00"/><rect x="1001" y="227" width="5" height="21" fill="#00ff00"/><rect x="1002" y="228" width="3" height="19" fill="#000"/><rect x="1011" y="221" width="1" height="23" fill="#00ff00"/><rect x="1009" y="227" width="5" height="14" fill="#00ff00"/><rect x="1010" y="228" width="3" height="12" fill="#fff"/><rect x="1019" y="227" width="1" height="19" fill="#00ff00"/><rect x="1017" y="233" width="5" height="10" fill="#00ff00"/><rect x="1018" y="234" width="3" height="8" fill="#000"/><rect x="1027" y="209" width="1" height="27" fill="#00ff00"/><rect x="1025" y="213" width="5" height="20" fill="#00ff00"/><rect x="1026" y="214" width="3" height="18" fill="#000"/><rect x="1035" y="199" width="1" height="17" fill="#00ff00"/><rect x="1033" y="210" width="5" height="5" fill="#00ff00"/><rect x="1034" y="211" width="3" height="3" fill="#000"/><rect x="1043" y="189" width="1" height="21" fill="#00ff00"/><rect x="1041" y="192" width="5" height="18" fill="#00ff00"/><rect x="1042" y="193" width="3" height="16" fill="#000"/><rect x="1051" y="188" width="1" height="7" fill="#00ff00"/><rect x="1049" y="192" width="5" height="1" fill="#00ff00"/><rect x="1059" y="185" width="1" height="9" fill="#00ff00"/><rect x="1057" y="190" width="5" height="4" fill="#00ff00"/><rect x="1058" y="191" width="3" height="2" fill="#000"/><rect x="1067" y="170" width="1" height="21" fill="#00ff00"/><rect x="1065" y="183" width="5" height="8" fill="#00ff00"/><rect x="1066" y="184" width="3" height="6" fill="#000"/><rect x="1075" y="180" width="1" height="7" fill="#00ff00"/><rect x="1073" y="181" width="5" height="1" fill="#00ff00"/><rect x="1083" y="179" width="1" height="9" fill="#00ff00"/><rect x="1081" y="183" width="5" height="4" fill="#00ff00"/><rect x="1082" y="184" width="3" height="2" fill="#fff"/><rect x="1091" y="180" width="1" height="7" fill="#00ff00"/><rect x="1089" y="182" width="5" height="4" fill="#00ff00"/><rect x="1090" y="183" width="3" height="2" fill="#000"/><rect x="1099" y="176" width="1" height="8" fill="#00ff00"/><rect x="1097" y="181" width="5" height="1" fill="#00ff00"/><rect x="1107" y="180" width="1" height="15" fill="#00ff00"/><rect x="1105" y="183" width="5" height="9" fill="#00ff00"/><rect x="1106" y="184" width="3" height="7" fill="#fff"/><rect x="1115" y="189" width="1" height="16" fill="#00ff00"/><rect x="1113" y="191" width="5" height="10" fill="#00ff00"/><rect x="1114" y="192" width="3" height="8" fill="#fff"/><rect x="1123" y="196" width="1" height="10" fill="#00ff00"/><rect x="1121" y="200" width="5" height="1" fill="#00ff00"/><rect x="1131" y="195" width="1" height="8" fill="#00ff00"/><rect x="1129" y="199" width="5" height="1" fill="#00ff00"/><rect x="1139" y="197" width="1" height="5" fill="#00ff00"/><rect x="1137" y="199" width="5" height="1" fill="#00ff00"/><rect x="1147" y="190" width="1" height="16" fill="#00ff00"/><rect x="1145" y="191" width="5" height="8" fill="#00ff00"/><rect x="1146" y="192" width="3" height="6" fill="#000"/><rect x="1155" y="170" width="1" height="23" fill="#00ff00"/><rect x="1153" y="171" width="5" height="22" fill="#00ff00"/><rect x="1154" y="172" width="3" height="20" fill="#000"/><rect x="1163" y="148" width="1" height="27" fill="#00ff00"/><rect x="1161" y="157" width="5" height="15" fill="#00ff00"/><rect x="1162" y="158" width="3" height="13" fill="#000"/><rect x="1171" y="152" width="1" height="16" fill="#00ff00"/><rect x="1169" y="157" width="5" height="11" fill="#00ff00"/><rect x="1170" y="158" width="3" height="9" fill="#fff"/><polyline points="795.9,298.1 807.7,308.5 819.5,316.4 834.2,314.4 849.0,316.4 863.7,316.4 878.5,319.4 893.2,321.7 908.0,326.2 922.7,339.4 934.5,338.8 943.4,340.9 955.2,354.8 964.0,348.9 978.8,358.6 990.0,351.8 1003.3,338.0 1010.6,338.3 1019.5,336.5 1028.3,323.2 1043.1,310.5 1051.9,310.5 1060.8,314.4 1069.6,315.3 1084.4,321.7 1099.1,322.3 1113.9,332.1 1125.7,336.5 1139.0,342.4 1146.3,338.0 1164.0,304.0 1170.5,310.5" fill="none" stroke="#20b2aa" stroke-width="1" shape-rendering="crispEdges"/></g><rect x="795.5" y="136.5" width="386" height="152" fill="none" stroke="#fff" stroke-width="1" shape-rendering="crispEdges"/><rect x="795.5" y="290.5" width="386" height="76" fill="none" stroke="#fff" stroke-width="1" shape-rendering="crispEdges"/><rect x="1181" y="158" width="5" height="1" fill="#fff"/><text x="1186.5" y="162.5" fill="#fff" font-size="12" text-anchor="start" font-family="Liberation Sans" filter="url(#crisp)" letter-spacing="0.3">1.39740</text><rect x="1181" y="192" width="5" height="1" fill="#fff"/><text x="1186.5" y="196.0" fill="#fff" font-size="12" text-anchor="start" font-family="Liberation Sans" filter="url(#crisp)" letter-spacing="0.3">1.39380</text><rect x="1181" y="224" width="5" height="1" fill="#fff"/><text x="1186.5" y="228.5" fill="#fff" font-size="12" text-anchor="start" font-family="Liberation Sans" filter="url(#crisp)" letter-spacing="0.3">1.39020</text><rect x="1181" y="256" width="5" height="1" fill="#fff"/><text x="1186.5" y="261.0" fill="#fff" font-size="12" text-anchor="start" font-family="Liberation Sans" filter="url(#crisp)" letter-spacing="0.3">1.38660</text><rect x="1181" y="291" width="5" height="1" fill="#fff"/><text x="1186.5" y="302.0" fill="#fff" font-size="12" text-anchor="start" font-family="Liberation Sans" filter="url(#crisp)" letter-spacing="0.3">300.98</text><rect x="1181" y="318" width="5" height="1" fill="#fff"/><text x="1186.5" y="322.5" fill="#fff" font-size="12" text-anchor="start" font-family="Liberation Sans" filter="url(#crisp)" letter-spacing="0.3">100.00</text><rect x="1181" y="332" width="5" height="1" fill="#fff"/><text x="1186.5" y="336.5" fill="#fff" font-size="12" text-anchor="start" font-family="Liberation Sans" filter="url(#crisp)" letter-spacing="0.3">0.00</text><rect x="1181" y="346" width="5" height="1" fill="#fff"/><text x="1186.5" y="351.0" fill="#fff" font-size="12" text-anchor="start" font-family="Liberation Sans" filter="url(#crisp)" letter-spacing="0.3">-100.00</text><rect x="1181" y="360" width="5" height="1" fill="#fff"/><text x="1186.5" y="364.0" fill="#fff" font-size="12" text-anchor="start" font-family="Liberation Sans" filter="url(#crisp)" letter-spacing="0.3">-239.20</text><rect x="1184" y="161" width="54" height="13" fill="#778899"/><text x="1187" y="171.5" fill="#0a0a0a" font-size="12" text-anchor="start" font-family="Liberation Sans"  letter-spacing="0.3">1.39651</text><rect x="795" y="366" width="1" height="5" fill="#fff"/><text x="795.5" y="381.5" fill="#fff" font-size="12" text-anchor="start" font-family="Liberation Sans" filter="url(#crisp)" letter-spacing="0.15">21 Jun 2021</text><rect x="923" y="366" width="1" height="5" fill="#fff"/><text x="923.5" y="381.5" fill="#fff" font-size="12" text-anchor="start" font-family="Liberation Sans" filter="url(#crisp)" letter-spacing="0.15">22 Jun 02:00</text><rect x="1051" y="366" width="1" height="5" fill="#fff"/><text x="1051.5" y="381.5" fill="#fff" font-size="12" text-anchor="start" font-family="Liberation Sans" filter="url(#crisp)" letter-spacing="0.15">22 Jun 18:00</text><rect x="800" y="141" width="17" height="14" rx="2" fill="#f4f4fb" stroke="#c8c8e0" stroke-width="1"/><rect x="801" y="142" width="15" height="3" fill="#8a8af0"/><rect x="802" y="146" width="6" height="8" fill="#f08a8a"/><rect x="809" y="146" width="6" height="8" fill="#8a8af5"/><rect x="802" y="148" width="6" height="1" fill="#fbdede"/><rect x="802" y="151" width="6" height="1" fill="#fbdede"/><rect x="809" y="148" width="6" height="1" fill="#dedefb"/><rect x="809" y="151" width="6" height="1" fill="#dedefb"/><text x="826.5" y="154" fill="#fff" font-size="12" text-anchor="start" font-family="Liberation Sans" filter="url(#crisp)" letter-spacing="-0.25">GBPUSD, H1:&#160; Great Britain Pound vs US Dollar</text><text x="797" y="305" fill="#fff" font-size="12" text-anchor="start" font-family="Liberation Sans" filter="url(#crisp)" >CCI(14) 149.54</text></svg>
<div class="r" style="left:311px;top:392px;width:474px;height:295px;background:#f0f0f0;border:1px solid #686868"></div>
<svg class="s" style="left:322px;top:399px" width="20" height="21" viewBox="0 -1 20 21"><rect x="0.5" y="0.5" width="18" height="14" fill="#eef4fb" stroke="#8aaad0"/><rect x="1" y="1" width="17" height="2" fill="#b0cce8"/><path d="M4 13 V8 M7 11 V5 M11 9 V4 M15 10 V5" stroke="#909090" stroke-width="1"/><circle cx="7" cy="15.5" r="4.3" fill="#d0c040"/><circle cx="14" cy="16" r="4.3" fill="#2a88c0"/><circle cx="10.5" cy="10.5" r="4.6" fill="#58a848"/><circle cx="9" cy="14.5" r="1.1" fill="#f08040"/><circle cx="13.5" cy="14.5" r="1.1" fill="#f08040"/><circle cx="11" cy="11" r="1" fill="#f08040"/></svg>
<div class="t" style="left:347px;top:402.43px;font-size:14.5px;color:#808080;letter-spacing:-0.5px">USDCHF,H1</div>
<svg class="s" style="left:662px;top:399px" width="122" height="26" viewBox="662 399 122 26"><rect x="669" y="412" width="11" height="3" fill="#a8a8a8"/><rect x="710.5" y="404.5" width="11" height="11" fill="none" stroke="#a8a8a8" stroke-width="2"/><path d="M753.5 404.5 L763.5 414.5 M763.5 404.5 L753.5 414.5" stroke="#a8a8a8" stroke-width="2.6" stroke-linecap="round"/></svg>
<div class="r" style="left:317px;top:427px;width:460px;height:252px;background:#a0a0a0"></div>
<div class="r" style="left:318px;top:428px;width:459px;height:251px;background:#e8e8e8"></div>
<div class="r" style="left:318px;top:428px;width:458px;height:250px;background:#696969"></div>
<svg class="s" style="left:319px;top:429px" width="458" height="250" viewBox="319 429 458 250"><rect x="319" y="429" width="458" height="250" fill="#000"/><clipPath id="c312393"><rect x="322" y="432" width="385" height="229"/></clipPath><g shape-rendering="crispEdges"><line x1="322" y1="437.5" x2="707" y2="437.5" stroke="#778899" stroke-width="1" stroke-dasharray="3,3"/><line x1="322" y1="469.5" x2="707" y2="469.5" stroke="#778899" stroke-width="1" stroke-dasharray="3,3"/><line x1="322" y1="501.5" x2="707" y2="501.5" stroke="#778899" stroke-width="1" stroke-dasharray="3,3"/><line x1="322" y1="533.5" x2="707" y2="533.5" stroke="#778899" stroke-width="1" stroke-dasharray="3,3"/><line x1="322" y1="565.5" x2="707" y2="565.5" stroke="#778899" stroke-width="1" stroke-dasharray="3,3"/><line x1="322" y1="597.5" x2="707" y2="597.5" stroke="#778899" stroke-width="1" stroke-dasharray="3,3"/><line x1="322" y1="629.5" x2="707" y2="629.5" stroke="#778899" stroke-width="1" stroke-dasharray="3,3"/><line x1="353.5" y1="432" x2="353.5" y2="661" stroke="#778899" stroke-width="1" stroke-dasharray="3,3"/><line x1="385.5" y1="432" x2="385.5" y2="661" stroke="#778899" stroke-width="1" stroke-dasharray="3,3"/><line x1="417.5" y1="432" x2="417.5" y2="661" stroke="#778899" stroke-width="1" stroke-dasharray="3,3"/><line x1="449.5" y1="432" x2="449.5" y2="661" stroke="#778899" stroke-width="1" stroke-dasharray="3,3"/><line x1="481.5" y1="432" x2="481.5" y2="661" stroke="#778899" stroke-width="1" stroke-dasharray="3,3"/><line x1="513.5" y1="432" x2="513.5" y2="661" stroke="#778899" stroke-width="1" stroke-dasharray="3,3"/><line x1="545.5" y1="432" x2="545.5" y2="661" stroke="#778899" stroke-width="1" stroke-dasharray="3,3"/><line x1="577.5" y1="432" x2="577.5" y2="661" stroke="#778899" stroke-width="1" stroke-dasharray="3,3"/><line x1="609.5" y1="432" x2="609.5" y2="661" stroke="#778899" stroke-width="1" stroke-dasharray="3,3"/><line x1="641.5" y1="432" x2="641.5" y2="661" stroke="#778899" stroke-width="1" stroke-dasharray="3,3"/><line x1="673.5" y1="432" x2="673.5" y2="661" stroke="#778899" stroke-width="1" stroke-dasharray="3,3"/><line x1="705.5" y1="432" x2="705.5" y2="661" stroke="#778899" stroke-width="1" stroke-dasharray="3,3"/></g><rect x="322" y="532" width="385" height="1" fill="#778899"/><g clip-path="url(#c312393)"><rect x="325" y="591" width="1" height="38" fill="#00ff00"/><rect x="324" y="612" width="1" height="1" fill="#00ff00"/><rect x="326" y="601" width="1" height="1" fill="#00ff00"/><rect x="329" y="581" width="1" height="31" fill="#00ff00"/><rect x="328" y="588" width="1" height="1" fill="#00ff00"/><rect x="330" y="602" width="1" height="1" fill="#00ff00"/><rect x="333" y="569" width="1" height="24" fill="#00ff00"/><rect x="332" y="586" width="1" height="1" fill="#00ff00"/><rect x="334" y="580" width="1" height="1" fill="#00ff00"/><rect x="337" y="571" width="1" height="15" fill="#00ff00"/><rect x="336" y="583" width="1" height="1" fill="#00ff00"/><rect x="338" y="576" width="1" height="1" fill="#00ff00"/><rect x="341" y="571" width="1" height="12" fill="#00ff00"/><rect x="340" y="576" width="1" height="1" fill="#00ff00"/><rect x="342" y="574" width="1" height="1" fill="#00ff00"/><rect x="345" y="566" width="1" height="38" fill="#00ff00"/><rect x="344" y="593" width="1" height="1" fill="#00ff00"/><rect x="346" y="581" width="1" height="1" fill="#00ff00"/><rect x="349" y="554" width="1" height="31" fill="#00ff00"/><rect x="348" y="564" width="1" height="1" fill="#00ff00"/><rect x="350" y="581" width="1" height="1" fill="#00ff00"/><rect x="353" y="535" width="1" height="45" fill="#00ff00"/><rect x="352" y="540" width="1" height="1" fill="#00ff00"/><rect x="354" y="556" width="1" height="1" fill="#00ff00"/><rect x="357" y="523" width="1" height="27" fill="#00ff00"/><rect x="356" y="540" width="1" height="1" fill="#00ff00"/><rect x="358" y="538" width="1" height="1" fill="#00ff00"/><rect x="361" y="522" width="1" height="24" fill="#00ff00"/><rect x="360" y="530" width="1" height="1" fill="#00ff00"/><rect x="362" y="529" width="1" height="1" fill="#00ff00"/><rect x="365" y="539" width="1" height="16" fill="#00ff00"/><rect x="364" y="548" width="1" height="1" fill="#00ff00"/><rect x="366" y="552" width="1" height="1" fill="#00ff00"/><rect x="369" y="534" width="1" height="15" fill="#00ff00"/><rect x="368" y="537" width="1" height="1" fill="#00ff00"/><rect x="370" y="544" width="1" height="1" fill="#00ff00"/><rect x="373" y="529" width="1" height="15" fill="#00ff00"/><rect x="372" y="540" width="1" height="1" fill="#00ff00"/><rect x="374" y="540" width="1" height="1" fill="#00ff00"/><rect x="377" y="533" width="1" height="21" fill="#00ff00"/><rect x="376" y="546" width="1" height="1" fill="#00ff00"/><rect x="378" y="537" width="1" height="1" fill="#00ff00"/><rect x="381" y="536" width="1" height="8" fill="#00ff00"/><rect x="380" y="542" width="1" height="1" fill="#00ff00"/><rect x="382" y="540" width="1" height="1" fill="#00ff00"/><rect x="385" y="536" width="1" height="6" fill="#00ff00"/><rect x="384" y="540" width="1" height="1" fill="#00ff00"/><rect x="386" y="538" width="1" height="1" fill="#00ff00"/><rect x="389" y="530" width="1" height="11" fill="#00ff00"/><rect x="388" y="538" width="1" height="1" fill="#00ff00"/><rect x="390" y="533" width="1" height="1" fill="#00ff00"/><rect x="393" y="527" width="1" height="16" fill="#00ff00"/><rect x="392" y="530" width="1" height="1" fill="#00ff00"/><rect x="394" y="538" width="1" height="1" fill="#00ff00"/><rect x="397" y="536" width="1" height="10" fill="#00ff00"/><rect x="396" y="537" width="1" height="1" fill="#00ff00"/><rect x="398" y="539" width="1" height="1" fill="#00ff00"/><rect x="401" y="541" width="1" height="10" fill="#00ff00"/><rect x="400" y="544" width="1" height="1" fill="#00ff00"/><rect x="402" y="547" width="1" height="1" fill="#00ff00"/><rect x="405" y="538" width="1" height="13" fill="#00ff00"/><rect x="404" y="544" width="1" height="1" fill="#00ff00"/><rect x="406" y="548" width="1" height="1" fill="#00ff00"/><rect x="409" y="523" width="1" height="19" fill="#00ff00"/><rect x="408" y="525" width="1" height="1" fill="#00ff00"/><rect x="410" y="530" width="1" height="1" fill="#00ff00"/><rect x="413" y="515" width="1" height="22" fill="#00ff00"/><rect x="412" y="527" width="1" height="1" fill="#00ff00"/><rect x="414" y="525" width="1" height="1" fill="#00ff00"/><rect x="417" y="514" width="1" height="33" fill="#00ff00"/><rect x="416" y="538" width="1" height="1" fill="#00ff00"/><rect x="418" y="522" width="1" height="1" fill="#00ff00"/><rect x="421" y="516" width="1" height="27" fill="#00ff00"/><rect x="420" y="526" width="1" height="1" fill="#00ff00"/><rect x="422" y="530" width="1" height="1" fill="#00ff00"/><rect x="425" y="510" width="1" height="29" fill="#00ff00"/><rect x="424" y="522" width="1" height="1" fill="#00ff00"/><rect x="426" y="528" width="1" height="1" fill="#00ff00"/><rect x="429" y="516" width="1" height="17" fill="#00ff00"/><rect x="428" y="527" width="1" height="1" fill="#00ff00"/><rect x="430" y="522" width="1" height="1" fill="#00ff00"/><rect x="433" y="513" width="1" height="16" fill="#00ff00"/><rect x="432" y="523" width="1" height="1" fill="#00ff00"/><rect x="434" y="518" width="1" height="1" fill="#00ff00"/><rect x="437" y="502" width="1" height="27" fill="#00ff00"/><rect x="436" y="508" width="1" height="1" fill="#00ff00"/><rect x="438" y="507" width="1" height="1" fill="#00ff00"/><rect x="441" y="475" width="1" height="34" fill="#00ff00"/><rect x="440" y="483" width="1" height="1" fill="#00ff00"/><rect x="442" y="489" width="1" height="1" fill="#00ff00"/><rect x="445" y="458" width="1" height="39" fill="#00ff00"/><rect x="444" y="465" width="1" height="1" fill="#00ff00"/><rect x="446" y="469" width="1" height="1" fill="#00ff00"/><rect x="449" y="453" width="1" height="33" fill="#00ff00"/><rect x="448" y="467" width="1" height="1" fill="#00ff00"/><rect x="450" y="458" width="1" height="1" fill="#00ff00"/><rect x="453" y="470" width="1" height="19" fill="#00ff00"/><rect x="452" y="479" width="1" height="1" fill="#00ff00"/><rect x="454" y="481" width="1" height="1" fill="#00ff00"/><rect x="457" y="476" width="1" height="15" fill="#00ff00"/><rect x="456" y="482" width="1" height="1" fill="#00ff00"/><rect x="458" y="481" width="1" height="1" fill="#00ff00"/><rect x="461" y="475" width="1" height="13" fill="#00ff00"/><rect x="460" y="480" width="1" height="1" fill="#00ff00"/><rect x="462" y="483" width="1" height="1" fill="#00ff00"/><rect x="465" y="468" width="1" height="15" fill="#00ff00"/><rect x="464" y="477" width="1" height="1" fill="#00ff00"/><rect x="466" y="476" width="1" height="1" fill="#00ff00"/><rect x="469" y="448" width="1" height="25" fill="#00ff00"/><rect x="468" y="457" width="1" height="1" fill="#00ff00"/><rect x="470" y="463" width="1" height="1" fill="#00ff00"/><rect x="473" y="456" width="1" height="16" fill="#00ff00"/><rect x="472" y="464" width="1" height="1" fill="#00ff00"/><rect x="474" y="467" width="1" height="1" fill="#00ff00"/><rect x="477" y="462" width="1" height="13" fill="#00ff00"/><rect x="476" y="465" width="1" height="1" fill="#00ff00"/><rect x="478" y="471" width="1" height="1" fill="#00ff00"/><rect x="481" y="463" width="1" height="13" fill="#00ff00"/><rect x="480" y="468" width="1" height="1" fill="#00ff00"/><rect x="482" y="469" width="1" height="1" fill="#00ff00"/><rect x="485" y="461" width="1" height="16" fill="#00ff00"/><rect x="484" y="474" width="1" height="1" fill="#00ff00"/><rect x="486" y="469" width="1" height="1" fill="#00ff00"/><rect x="489" y="457" width="1" height="16" fill="#00ff00"/><rect x="488" y="461" width="1" height="1" fill="#00ff00"/><rect x="490" y="470" width="1" height="1" fill="#00ff00"/><rect x="493" y="451" width="1" height="18" fill="#00ff00"/><rect x="492" y="454" width="1" height="1" fill="#00ff00"/><rect x="494" y="456" width="1" height="1" fill="#00ff00"/><rect x="497" y="451" width="1" height="19" fill="#00ff00"/><rect x="496" y="458" width="1" height="1" fill="#00ff00"/><rect x="498" y="466" width="1" height="1" fill="#00ff00"/><rect x="501" y="447" width="1" height="38" fill="#00ff00"/><rect x="500" y="454" width="1" height="1" fill="#00ff00"/><rect x="502" y="480" width="1" height="1" fill="#00ff00"/><rect x="505" y="465" width="1" height="24" fill="#00ff00"/><rect x="504" y="477" width="1" height="1" fill="#00ff00"/><rect x="506" y="478" width="1" height="1" fill="#00ff00"/><rect x="509" y="474" width="1" height="16" fill="#00ff00"/><rect x="508" y="486" width="1" height="1" fill="#00ff00"/><rect x="510" y="487" width="1" height="1" fill="#00ff00"/><rect x="513" y="479" width="1" height="11" fill="#00ff00"/><rect x="512" y="481" width="1" height="1" fill="#00ff00"/><rect x="514" y="487" width="1" height="1" fill="#00ff00"/><rect x="517" y="478" width="1" height="14" fill="#00ff00"/><rect x="516" y="482" width="1" height="1" fill="#00ff00"/><rect x="518" y="485" width="1" height="1" fill="#00ff00"/><rect x="521" y="478" width="1" height="14" fill="#00ff00"/><rect x="520" y="485" width="1" height="1" fill="#00ff00"/><rect x="522" y="480" width="1" height="1" fill="#00ff00"/><rect x="525" y="476" width="1" height="15" fill="#00ff00"/><rect x="524" y="488" width="1" height="1" fill="#00ff00"/><rect x="526" y="488" width="1" height="1" fill="#00ff00"/><rect x="529" y="484" width="1" height="23" fill="#00ff00"/><rect x="528" y="498" width="1" height="1" fill="#00ff00"/><rect x="530" y="499" width="1" height="1" fill="#00ff00"/><rect x="533" y="502" width="1" height="38" fill="#00ff00"/><rect x="532" y="529" width="1" height="1" fill="#00ff00"/><rect x="534" y="506" width="1" height="1" fill="#00ff00"/><rect x="537" y="515" width="1" height="21" fill="#00ff00"/><rect x="536" y="519" width="1" height="1" fill="#00ff00"/><rect x="538" y="523" width="1" height="1" fill="#00ff00"/><rect x="541" y="521" width="1" height="13" fill="#00ff00"/><rect x="540" y="527" width="1" height="1" fill="#00ff00"/><rect x="542" y="525" width="1" height="1" fill="#00ff00"/><rect x="545" y="524" width="1" height="12" fill="#00ff00"/><rect x="544" y="531" width="1" height="1" fill="#00ff00"/><rect x="546" y="525" width="1" height="1" fill="#00ff00"/><rect x="549" y="526" width="1" height="11" fill="#00ff00"/><rect x="548" y="535" width="1" height="1" fill="#00ff00"/><rect x="550" y="532" width="1" height="1" fill="#00ff00"/><rect x="553" y="525" width="1" height="15" fill="#00ff00"/><rect x="552" y="533" width="1" height="1" fill="#00ff00"/><rect x="554" y="534" width="1" height="1" fill="#00ff00"/><rect x="557" y="528" width="1" height="12" fill="#00ff00"/><rect x="556" y="533" width="1" height="1" fill="#00ff00"/><rect x="558" y="538" width="1" height="1" fill="#00ff00"/><rect x="561" y="531" width="1" height="11" fill="#00ff00"/><rect x="560" y="535" width="1" height="1" fill="#00ff00"/><rect x="562" y="535" width="1" height="1" fill="#00ff00"/><rect x="565" y="528" width="1" height="11" fill="#00ff00"/><rect x="564" y="533" width="1" height="1" fill="#00ff00"/><rect x="566" y="533" width="1" height="1" fill="#00ff00"/><rect x="569" y="522" width="1" height="12" fill="#00ff00"/><rect x="568" y="526" width="1" height="1" fill="#00ff00"/><rect x="570" y="524" width="1" height="1" fill="#00ff00"/><rect x="573" y="517" width="1" height="10" fill="#00ff00"/><rect x="572" y="523" width="1" height="1" fill="#00ff00"/><rect x="574" y="522" width="1" height="1" fill="#00ff00"/><rect x="577" y="510" width="1" height="16" fill="#00ff00"/><rect x="576" y="519" width="1" height="1" fill="#00ff00"/><rect x="578" y="512" width="1" height="1" fill="#00ff00"/><rect x="581" y="510" width="1" height="12" fill="#00ff00"/><rect x="580" y="516" width="1" height="1" fill="#00ff00"/><rect x="582" y="515" width="1" height="1" fill="#00ff00"/><rect x="585" y="511" width="1" height="10" fill="#00ff00"/><rect x="584" y="516" width="1" height="1" fill="#00ff00"/><rect x="586" y="514" width="1" height="1" fill="#00ff00"/><rect x="589" y="508" width="1" height="9" fill="#00ff00"/><rect x="588" y="510" width="1" height="1" fill="#00ff00"/><rect x="590" y="509" width="1" height="1" fill="#00ff00"/><rect x="593" y="495" width="1" height="20" fill="#00ff00"/><rect x="592" y="507" width="1" height="1" fill="#00ff00"/><rect x="594" y="510" width="1" height="1" fill="#00ff00"/><rect x="597" y="489" width="1" height="29" fill="#00ff00"/><rect x="596" y="497" width="1" height="1" fill="#00ff00"/><rect x="598" y="509" width="1" height="1" fill="#00ff00"/><rect x="601" y="500" width="1" height="22" fill="#00ff00"/><rect x="600" y="504" width="1" height="1" fill="#00ff00"/><rect x="602" y="515" width="1" height="1" fill="#00ff00"/><rect x="605" y="501" width="1" height="15" fill="#00ff00"/><rect x="604" y="513" width="1" height="1" fill="#00ff00"/><rect x="606" y="502" width="1" height="1" fill="#00ff00"/><rect x="609" y="486" width="1" height="25" fill="#00ff00"/><rect x="608" y="495" width="1" height="1" fill="#00ff00"/><rect x="610" y="490" width="1" height="1" fill="#00ff00"/><rect x="613" y="485" width="1" height="20" fill="#00ff00"/><rect x="612" y="493" width="1" height="1" fill="#00ff00"/><rect x="614" y="492" width="1" height="1" fill="#00ff00"/><rect x="617" y="494" width="1" height="9" fill="#00ff00"/><rect x="616" y="495" width="1" height="1" fill="#00ff00"/><rect x="618" y="501" width="1" height="1" fill="#00ff00"/><rect x="621" y="491" width="1" height="19" fill="#00ff00"/><rect x="620" y="506" width="1" height="1" fill="#00ff00"/><rect x="622" y="507" width="1" height="1" fill="#00ff00"/><rect x="625" y="491" width="1" height="21" fill="#00ff00"/><rect x="624" y="498" width="1" height="1" fill="#00ff00"/><rect x="626" y="508" width="1" height="1" fill="#00ff00"/><rect x="629" y="493" width="1" height="24" fill="#00ff00"/><rect x="628" y="511" width="1" height="1" fill="#00ff00"/><rect x="630" y="502" width="1" height="1" fill="#00ff00"/><rect x="633" y="493" width="1" height="19" fill="#00ff00"/><rect x="632" y="507" width="1" height="1" fill="#00ff00"/><rect x="634" y="509" width="1" height="1" fill="#00ff00"/><rect x="637" y="493" width="1" height="30" fill="#00ff00"/><rect x="636" y="500" width="1" height="1" fill="#00ff00"/><rect x="638" y="516" width="1" height="1" fill="#00ff00"/><rect x="641" y="513" width="1" height="17" fill="#00ff00"/><rect x="640" y="524" width="1" height="1" fill="#00ff00"/><rect x="642" y="519" width="1" height="1" fill="#00ff00"/><rect x="645" y="523" width="1" height="14" fill="#00ff00"/><rect x="644" y="532" width="1" height="1" fill="#00ff00"/><rect x="646" y="526" width="1" height="1" fill="#00ff00"/><rect x="649" y="523" width="1" height="21" fill="#00ff00"/><rect x="648" y="532" width="1" height="1" fill="#00ff00"/><rect x="650" y="526" width="1" height="1" fill="#00ff00"/><rect x="653" y="519" width="1" height="17" fill="#00ff00"/><rect x="652" y="530" width="1" height="1" fill="#00ff00"/><rect x="654" y="523" width="1" height="1" fill="#00ff00"/><rect x="657" y="524" width="1" height="13" fill="#00ff00"/><rect x="656" y="532" width="1" height="1" fill="#00ff00"/><rect x="658" y="533" width="1" height="1" fill="#00ff00"/><rect x="661" y="524" width="1" height="11" fill="#00ff00"/><rect x="660" y="532" width="1" height="1" fill="#00ff00"/><rect x="662" y="530" width="1" height="1" fill="#00ff00"/><rect x="665" y="521" width="1" height="9" fill="#00ff00"/><rect x="664" y="528" width="1" height="1" fill="#00ff00"/><rect x="666" y="526" width="1" height="1" fill="#00ff00"/><rect x="669" y="516" width="1" height="11" fill="#00ff00"/><rect x="668" y="518" width="1" height="1" fill="#00ff00"/><rect x="670" y="525" width="1" height="1" fill="#00ff00"/><rect x="673" y="506" width="1" height="14" fill="#00ff00"/><rect x="672" y="513" width="1" height="1" fill="#00ff00"/><rect x="674" y="508" width="1" height="1" fill="#00ff00"/><rect x="677" y="504" width="1" height="9" fill="#00ff00"/><rect x="676" y="506" width="1" height="1" fill="#00ff00"/><rect x="678" y="510" width="1" height="1" fill="#00ff00"/><rect x="681" y="506" width="1" height="6" fill="#00ff00"/><rect x="680" y="510" width="1" height="1" fill="#00ff00"/><rect x="682" y="507" width="1" height="1" fill="#00ff00"/><rect x="685" y="506" width="1" height="7" fill="#00ff00"/><rect x="684" y="507" width="1" height="1" fill="#00ff00"/><rect x="686" y="511" width="1" height="1" fill="#00ff00"/><rect x="689" y="505" width="1" height="7" fill="#00ff00"/><rect x="688" y="508" width="1" height="1" fill="#00ff00"/><rect x="690" y="509" width="1" height="1" fill="#00ff00"/><rect x="693" y="507" width="1" height="23" fill="#00ff00"/><rect x="692" y="518" width="1" height="1" fill="#00ff00"/><rect x="694" y="512" width="1" height="1" fill="#00ff00"/><rect x="697" y="513" width="1" height="21" fill="#00ff00"/><rect x="696" y="521" width="1" height="1" fill="#00ff00"/><rect x="698" y="526" width="1" height="1" fill="#00ff00"/><rect x="701" y="527" width="1" height="11" fill="#00ff00"/><rect x="700" y="532" width="1" height="1" fill="#00ff00"/><rect x="702" y="535" width="1" height="1" fill="#00ff00"/><rect x="705" y="533" width="1" height="8" fill="#00ff00"/><rect x="704" y="539" width="1" height="1" fill="#00ff00"/><rect x="706" y="535" width="1" height="1" fill="#00ff00"/><polyline points="329.3,659.8 331.1,656.6 333.4,652.5 336.1,647.6 339.2,642.1 342.5,636.2 345.8,630.0 349.0,623.6 351.9,617.4 354.8,610.7 357.8,603.2 360.8,595.3 363.8,587.3 366.7,579.5 369.5,572.3 372.2,565.9 374.6,560.8 376.7,556.9 378.6,554.1 380.4,552.1 382.0,550.7 383.6,549.7 385.2,548.8 386.9,547.8 388.7,546.6 390.6,545.3 392.4,544.1 394.3,543.0 396.1,542.0 398.2,541.1 400.4,540.1 402.9,539.2 405.7,538.2 409.0,537.1 412.9,536.2 417.1,535.2 421.4,534.3 425.8,533.3 429.9,532.2 433.6,531.0 436.8,529.7 439.4,528.2 441.5,526.7 443.2,525.0 444.8,523.3 446.2,521.5 447.6,519.6 449.2,517.6 451.0,515.5 452.9,513.4 454.8,511.1 456.7,508.8 458.7,506.4 460.8,503.9 463.0,501.3 465.4,498.6 467.9,495.7 470.8,492.5 473.9,488.8 477.2,484.9 480.7,481.0 484.1,477.2 487.4,473.7 490.6,470.9 493.4,468.8 495.9,467.7 498.4,467.2 500.6,467.3 502.8,467.8 504.8,468.5 506.6,469.2 508.4,469.9 510.0,470.3 511.4,470.4 512.6,470.4 513.5,470.4 514.4,470.4 515.2,470.5 516.2,470.7 517.2,471.1 518.5,471.7 520.0,472.4 521.6,473.4 523.3,474.4 525.0,475.6 526.9,476.9 528.8,478.3 530.7,479.9 532.6,481.6 534.6,483.5 536.7,485.6 538.8,488.0 540.9,490.4 543.1,492.9 545.3,495.4 547.5,497.7 549.6,500.0 551.7,502.1 553.8,504.2 555.9,506.3 558.0,508.3 560.1,510.3 562.2,512.2 564.4,513.9 566.6,515.5 568.8,517.1 571.1,518.6 573.5,520.1 575.9,521.5 578.2,522.7 580.5,523.6 582.8,524.3 585.0,524.6 587.1,524.4 589.2,523.8 591.2,522.9 593.2,521.8 595.1,520.5 597.0,519.2 598.8,518.0 600.5,516.9 602.1,516.0 603.5,515.2 604.7,514.3 605.9,513.5 607.2,512.6 608.5,511.7 610.0,510.8 611.8,509.9 614.0,508.8 616.4,507.6 619.0,506.3 621.7,505.0 624.5,503.8 627.1,502.7 629.5,501.9 631.6,501.4 633.4,501.1 634.8,501.1 636.0,501.3 637.1,501.6 638.3,502.1 639.5,502.7 641.1,503.4 643.0,504.2 645.3,505.2 648.1,506.5 651.1,508.0 654.3,509.5 657.4,511.1 660.5,512.6 663.2,513.9 665.6,515.0 667.5,515.7 668.9,516.3 670.1,516.8 671.2,517.1 672.3,517.4 673.5,517.7 675.0,518.0 676.9,518.4 679.4,518.8 682.4,519.3 685.8,519.8 689.2,520.3 692.6,520.7 695.7,521.1 698.2,521.5 700.1,521.7" fill="none" stroke="#ff0000" stroke-width="1" shape-rendering="crispEdges"/></g><rect x="321.5" y="431.5" width="386" height="230" fill="none" stroke="#fff" stroke-width="1" shape-rendering="crispEdges"/><rect x="707" y="437" width="5" height="1" fill="#fff"/><text x="712.5" y="441.5" fill="#fff" font-size="12" text-anchor="start" font-family="Liberation Sans" filter="url(#crisp)" letter-spacing="0.3">0.92410</text><rect x="707" y="470" width="5" height="1" fill="#fff"/><text x="712.5" y="474.0" fill="#fff" font-size="12" text-anchor="start" font-family="Liberation Sans" filter="url(#crisp)" letter-spacing="0.3">0.92200</text><rect x="707" y="502" width="5" height="1" fill="#fff"/><text x="712.5" y="506.0" fill="#fff" font-size="12" text-anchor="start" font-family="Liberation Sans" filter="url(#crisp)" letter-spacing="0.3">0.91990</text><rect x="707" y="565" width="5" height="1" fill="#fff"/><text x="712.5" y="569.5" fill="#fff" font-size="12" text-anchor="start" font-family="Liberation Sans" filter="url(#crisp)" letter-spacing="0.3">0.91570</text><rect x="707" y="597" width="5" height="1" fill="#fff"/><text x="712.5" y="601.5" fill="#fff" font-size="12" text-anchor="start" font-family="Liberation Sans" filter="url(#crisp)" letter-spacing="0.3">0.91360</text><rect x="707" y="630" width="5" height="1" fill="#fff"/><text x="712.5" y="634.0" fill="#fff" font-size="12" text-anchor="start" font-family="Liberation Sans" filter="url(#crisp)" letter-spacing="0.3">0.91150</text><rect x="710" y="526" width="54" height="13" fill="#778899"/><text x="713" y="536.5" fill="#0a0a0a" font-size="12" text-anchor="start" font-family="Liberation Sans"  letter-spacing="0.3">0.91786</text><rect x="321" y="661" width="1" height="5" fill="#fff"/><text x="321.5" y="676.5" fill="#fff" font-size="12" text-anchor="start" font-family="Liberation Sans" filter="url(#crisp)" letter-spacing="0.15">17 Jun 2021</text><rect x="449" y="661" width="1" height="5" fill="#fff"/><text x="449.5" y="676.5" fill="#fff" font-size="12" text-anchor="start" font-family="Liberation Sans" filter="url(#crisp)" letter-spacing="0.15">18 Jun 16:00</text><rect x="577" y="661" width="1" height="5" fill="#fff"/><text x="577.5" y="676.5" fill="#fff" font-size="12" text-anchor="start" font-family="Liberation Sans" filter="url(#crisp)" letter-spacing="0.15">22 Jun 02:00</text><rect x="326" y="436" width="17" height="14" rx="2" fill="#f4f4fb" stroke="#c8c8e0" stroke-width="1"/><rect x="327" y="437" width="15" height="3" fill="#8a8af0"/><rect x="328" y="441" width="6" height="8" fill="#f08a8a"/><rect x="335" y="441" width="6" height="8" fill="#8a8af5"/><rect x="328" y="443" width="6" height="1" fill="#fbdede"/><rect x="328" y="446" width="6" height="1" fill="#fbdede"/><rect x="335" y="443" width="6" height="1" fill="#dedefb"/><rect x="335" y="446" width="6" height="1" fill="#dedefb"/><text x="352.5" y="449" fill="#fff" font-size="12" text-anchor="start" font-family="Liberation Sans" filter="url(#crisp)" letter-spacing="-0.25">USDCHF, H1:&#160; US Dollar vs Swiss Franc</text></svg>
<div class="r" style="left:785px;top:392px;width:474px;height:295px;background:#f0f0f0;border:1px solid #686868"></div>
<svg class="s" style="left:796px;top:399px" width="20" height="21" viewBox="0 -1 20 21"><rect x="0.5" y="0.5" width="18" height="14" fill="#eef4fb" stroke="#8aaad0"/><rect x="1" y="1" width="17" height="2" fill="#b0cce8"/><path d="M4 13 V8 M7 11 V5 M11 9 V4 M15 10 V5" stroke="#909090" stroke-width="1"/><circle cx="7" cy="15.5" r="4.3" fill="#d0c040"/><circle cx="14" cy="16" r="4.3" fill="#2a88c0"/><circle cx="10.5" cy="10.5" r="4.6" fill="#58a848"/><circle cx="9" cy="14.5" r="1.1" fill="#f08040"/><circle cx="13.5" cy="14.5" r="1.1" fill="#f08040"/><circle cx="11" cy="11" r="1" fill="#f08040"/></svg>
<div class="t" style="left:821px;top:402.43px;font-size:14.5px;color:#808080;letter-spacing:-0.5px">USDJPY,H1</div>
<svg class="s" style="left:1136px;top:399px" width="122" height="26" viewBox="1136 399 122 26"><rect x="1143" y="412" width="11" height="3" fill="#a8a8a8"/><rect x="1184.5" y="404.5" width="11" height="11" fill="none" stroke="#a8a8a8" stroke-width="2"/><path d="M1227.5 404.5 L1237.5 414.5 M1237.5 404.5 L1227.5 414.5" stroke="#a8a8a8" stroke-width="2.6" stroke-linecap="round"/></svg>
<div class="r" style="left:791px;top:427px;width:460px;height:252px;background:#a0a0a0"></div>
<div class="r" style="left:792px;top:428px;width:459px;height:251px;background:#e8e8e8"></div>
<div class="r" style="left:792px;top:428px;width:458px;height:250px;background:#696969"></div>
<svg class="s" style="left:793px;top:429px" width="458" height="250" viewBox="793 429 458 250"><rect x="793" y="429" width="458" height="250" fill="#000"/><clipPath id="c786393"><rect x="796" y="432" width="399" height="151"/><rect x="796" y="586" width="399" height="75"/></clipPath><g shape-rendering="crispEdges"><line x1="796" y1="453.5" x2="1195" y2="453.5" stroke="#778899" stroke-width="1" stroke-dasharray="3,3"/><line x1="796" y1="486.5" x2="1195" y2="486.5" stroke="#778899" stroke-width="1" stroke-dasharray="3,3"/><line x1="796" y1="518.5" x2="1195" y2="518.5" stroke="#778899" stroke-width="1" stroke-dasharray="3,3"/><line x1="796" y1="551.5" x2="1195" y2="551.5" stroke="#778899" stroke-width="1" stroke-dasharray="3,3"/><line x1="827.5" y1="432" x2="827.5" y2="583" stroke="#778899" stroke-width="1" stroke-dasharray="3,3"/><line x1="859.5" y1="432" x2="859.5" y2="583" stroke="#778899" stroke-width="1" stroke-dasharray="3,3"/><line x1="891.5" y1="432" x2="891.5" y2="583" stroke="#778899" stroke-width="1" stroke-dasharray="3,3"/><line x1="923.5" y1="432" x2="923.5" y2="583" stroke="#778899" stroke-width="1" stroke-dasharray="3,3"/><line x1="955.5" y1="432" x2="955.5" y2="583" stroke="#778899" stroke-width="1" stroke-dasharray="3,3"/><line x1="987.5" y1="432" x2="987.5" y2="583" stroke="#778899" stroke-width="1" stroke-dasharray="3,3"/><line x1="1019.5" y1="432" x2="1019.5" y2="583" stroke="#778899" stroke-width="1" stroke-dasharray="3,3"/><line x1="1051.5" y1="432" x2="1051.5" y2="583" stroke="#778899" stroke-width="1" stroke-dasharray="3,3"/><line x1="1083.5" y1="432" x2="1083.5" y2="583" stroke="#778899" stroke-width="1" stroke-dasharray="3,3"/><line x1="1115.5" y1="432" x2="1115.5" y2="583" stroke="#778899" stroke-width="1" stroke-dasharray="3,3"/><line x1="1147.5" y1="432" x2="1147.5" y2="583" stroke="#778899" stroke-width="1" stroke-dasharray="3,3"/><line x1="1179.5" y1="432" x2="1179.5" y2="583" stroke="#778899" stroke-width="1" stroke-dasharray="3,3"/><line x1="796" y1="633.5" x2="1195" y2="633.5" stroke="#778899" stroke-width="1" stroke-dasharray="3,3"/><line x1="827.5" y1="586" x2="827.5" y2="661" stroke="#778899" stroke-width="1" stroke-dasharray="3,3"/><line x1="859.5" y1="586" x2="859.5" y2="661" stroke="#778899" stroke-width="1" stroke-dasharray="3,3"/><line x1="891.5" y1="586" x2="891.5" y2="661" stroke="#778899" stroke-width="1" stroke-dasharray="3,3"/><line x1="923.5" y1="586" x2="923.5" y2="661" stroke="#778899" stroke-width="1" stroke-dasharray="3,3"/><line x1="955.5" y1="586" x2="955.5" y2="661" stroke="#778899" stroke-width="1" stroke-dasharray="3,3"/><line x1="987.5" y1="586" x2="987.5" y2="661" stroke="#778899" stroke-width="1" stroke-dasharray="3,3"/><line x1="1019.5" y1="586" x2="1019.5" y2="661" stroke="#778899" stroke-width="1" stroke-dasharray="3,3"/><line x1="1051.5" y1="586" x2="1051.5" y2="661" stroke="#778899" stroke-width="1" stroke-dasharray="3,3"/><line x1="1083.5" y1="586" x2="1083.5" y2="661" stroke="#778899" stroke-width="1" stroke-dasharray="3,3"/><line x1="1115.5" y1="586" x2="1115.5" y2="661" stroke="#778899" stroke-width="1" stroke-dasharray="3,3"/><line x1="1147.5" y1="586" x2="1147.5" y2="661" stroke="#778899" stroke-width="1" stroke-dasharray="3,3"/><line x1="1179.5" y1="586" x2="1179.5" y2="661" stroke="#778899" stroke-width="1" stroke-dasharray="3,3"/></g><rect x="796" y="448" width="399" height="1" fill="#778899"/><g clip-path="url(#c786393)"><rect x="799" y="465" width="1" height="14" fill="#00ff00"/><rect x="798" y="473" width="1" height="1" fill="#00ff00"/><rect x="800" y="469" width="1" height="1" fill="#00ff00"/><rect x="803" y="461" width="1" height="17" fill="#00ff00"/><rect x="802" y="473" width="1" height="1" fill="#00ff00"/><rect x="804" y="473" width="1" height="1" fill="#00ff00"/><rect x="807" y="464" width="1" height="16" fill="#00ff00"/><rect x="806" y="468" width="1" height="1" fill="#00ff00"/><rect x="808" y="472" width="1" height="1" fill="#00ff00"/><rect x="811" y="469" width="1" height="16" fill="#00ff00"/><rect x="810" y="478" width="1" height="1" fill="#00ff00"/><rect x="812" y="479" width="1" height="1" fill="#00ff00"/><rect x="815" y="466" width="1" height="15" fill="#00ff00"/><rect x="814" y="469" width="1" height="1" fill="#00ff00"/><rect x="816" y="469" width="1" height="1" fill="#00ff00"/><rect x="819" y="460" width="1" height="15" fill="#00ff00"/><rect x="818" y="466" width="1" height="1" fill="#00ff00"/><rect x="820" y="466" width="1" height="1" fill="#00ff00"/><rect x="823" y="461" width="1" height="13" fill="#00ff00"/><rect x="822" y="463" width="1" height="1" fill="#00ff00"/><rect x="824" y="471" width="1" height="1" fill="#00ff00"/><rect x="827" y="466" width="1" height="28" fill="#00ff00"/><rect x="826" y="486" width="1" height="1" fill="#00ff00"/><rect x="828" y="474" width="1" height="1" fill="#00ff00"/><rect x="831" y="487" width="1" height="16" fill="#00ff00"/><rect x="830" y="489" width="1" height="1" fill="#00ff00"/><rect x="832" y="492" width="1" height="1" fill="#00ff00"/><rect x="835" y="493" width="1" height="31" fill="#00ff00"/><rect x="834" y="502" width="1" height="1" fill="#00ff00"/><rect x="836" y="510" width="1" height="1" fill="#00ff00"/><rect x="839" y="503" width="1" height="18" fill="#00ff00"/><rect x="838" y="507" width="1" height="1" fill="#00ff00"/><rect x="840" y="508" width="1" height="1" fill="#00ff00"/><rect x="843" y="510" width="1" height="18" fill="#00ff00"/><rect x="842" y="523" width="1" height="1" fill="#00ff00"/><rect x="844" y="522" width="1" height="1" fill="#00ff00"/><rect x="847" y="508" width="1" height="17" fill="#00ff00"/><rect x="846" y="514" width="1" height="1" fill="#00ff00"/><rect x="848" y="512" width="1" height="1" fill="#00ff00"/><rect x="851" y="514" width="1" height="11" fill="#00ff00"/><rect x="850" y="519" width="1" height="1" fill="#00ff00"/><rect x="852" y="521" width="1" height="1" fill="#00ff00"/><rect x="855" y="512" width="1" height="11" fill="#00ff00"/><rect x="854" y="517" width="1" height="1" fill="#00ff00"/><rect x="856" y="519" width="1" height="1" fill="#00ff00"/><rect x="859" y="513" width="1" height="9" fill="#00ff00"/><rect x="858" y="519" width="1" height="1" fill="#00ff00"/><rect x="860" y="515" width="1" height="1" fill="#00ff00"/><rect x="863" y="516" width="1" height="11" fill="#00ff00"/><rect x="862" y="520" width="1" height="1" fill="#00ff00"/><rect x="864" y="518" width="1" height="1" fill="#00ff00"/><rect x="867" y="514" width="1" height="12" fill="#00ff00"/><rect x="866" y="522" width="1" height="1" fill="#00ff00"/><rect x="868" y="522" width="1" height="1" fill="#00ff00"/><rect x="871" y="510" width="1" height="11" fill="#00ff00"/><rect x="870" y="515" width="1" height="1" fill="#00ff00"/><rect x="872" y="513" width="1" height="1" fill="#00ff00"/><rect x="875" y="509" width="1" height="11" fill="#00ff00"/><rect x="874" y="513" width="1" height="1" fill="#00ff00"/><rect x="876" y="513" width="1" height="1" fill="#00ff00"/><rect x="879" y="511" width="1" height="18" fill="#00ff00"/><rect x="878" y="513" width="1" height="1" fill="#00ff00"/><rect x="880" y="518" width="1" height="1" fill="#00ff00"/><rect x="883" y="521" width="1" height="9" fill="#00ff00"/><rect x="882" y="524" width="1" height="1" fill="#00ff00"/><rect x="884" y="526" width="1" height="1" fill="#00ff00"/><rect x="887" y="520" width="1" height="10" fill="#00ff00"/><rect x="886" y="527" width="1" height="1" fill="#00ff00"/><rect x="888" y="524" width="1" height="1" fill="#00ff00"/><rect x="891" y="518" width="1" height="13" fill="#00ff00"/><rect x="890" y="523" width="1" height="1" fill="#00ff00"/><rect x="892" y="527" width="1" height="1" fill="#00ff00"/><rect x="895" y="523" width="1" height="25" fill="#00ff00"/><rect x="894" y="529" width="1" height="1" fill="#00ff00"/><rect x="896" y="536" width="1" height="1" fill="#00ff00"/><rect x="899" y="530" width="1" height="16" fill="#00ff00"/><rect x="898" y="534" width="1" height="1" fill="#00ff00"/><rect x="900" y="537" width="1" height="1" fill="#00ff00"/><rect x="903" y="527" width="1" height="25" fill="#00ff00"/><rect x="902" y="548" width="1" height="1" fill="#00ff00"/><rect x="904" y="542" width="1" height="1" fill="#00ff00"/><rect x="907" y="527" width="1" height="24" fill="#00ff00"/><rect x="906" y="536" width="1" height="1" fill="#00ff00"/><rect x="908" y="531" width="1" height="1" fill="#00ff00"/><rect x="911" y="521" width="1" height="15" fill="#00ff00"/><rect x="910" y="525" width="1" height="1" fill="#00ff00"/><rect x="912" y="523" width="1" height="1" fill="#00ff00"/><rect x="915" y="524" width="1" height="16" fill="#00ff00"/><rect x="914" y="530" width="1" height="1" fill="#00ff00"/><rect x="916" y="537" width="1" height="1" fill="#00ff00"/><rect x="919" y="527" width="1" height="9" fill="#00ff00"/><rect x="918" y="530" width="1" height="1" fill="#00ff00"/><rect x="920" y="529" width="1" height="1" fill="#00ff00"/><rect x="923" y="515" width="1" height="17" fill="#00ff00"/><rect x="922" y="526" width="1" height="1" fill="#00ff00"/><rect x="924" y="526" width="1" height="1" fill="#00ff00"/><rect x="927" y="496" width="1" height="27" fill="#00ff00"/><rect x="926" y="505" width="1" height="1" fill="#00ff00"/><rect x="928" y="507" width="1" height="1" fill="#00ff00"/><rect x="931" y="491" width="1" height="50" fill="#00ff00"/><rect x="930" y="509" width="1" height="1" fill="#00ff00"/><rect x="932" y="526" width="1" height="1" fill="#00ff00"/><rect x="935" y="507" width="1" height="19" fill="#00ff00"/><rect x="934" y="514" width="1" height="1" fill="#00ff00"/><rect x="936" y="512" width="1" height="1" fill="#00ff00"/><rect x="939" y="515" width="1" height="14" fill="#00ff00"/><rect x="938" y="522" width="1" height="1" fill="#00ff00"/><rect x="940" y="517" width="1" height="1" fill="#00ff00"/><rect x="943" y="519" width="1" height="12" fill="#00ff00"/><rect x="942" y="525" width="1" height="1" fill="#00ff00"/><rect x="944" y="521" width="1" height="1" fill="#00ff00"/><rect x="947" y="525" width="1" height="9" fill="#00ff00"/><rect x="946" y="530" width="1" height="1" fill="#00ff00"/><rect x="948" y="530" width="1" height="1" fill="#00ff00"/><rect x="951" y="523" width="1" height="13" fill="#00ff00"/><rect x="950" y="527" width="1" height="1" fill="#00ff00"/><rect x="952" y="531" width="1" height="1" fill="#00ff00"/><rect x="955" y="519" width="1" height="12" fill="#00ff00"/><rect x="954" y="528" width="1" height="1" fill="#00ff00"/><rect x="956" y="522" width="1" height="1" fill="#00ff00"/><rect x="959" y="518" width="1" height="14" fill="#00ff00"/><rect x="958" y="522" width="1" height="1" fill="#00ff00"/><rect x="960" y="520" width="1" height="1" fill="#00ff00"/><rect x="963" y="517" width="1" height="14" fill="#00ff00"/><rect x="962" y="524" width="1" height="1" fill="#00ff00"/><rect x="964" y="527" width="1" height="1" fill="#00ff00"/><rect x="967" y="519" width="1" height="14" fill="#00ff00"/><rect x="966" y="527" width="1" height="1" fill="#00ff00"/><rect x="968" y="530" width="1" height="1" fill="#00ff00"/><rect x="971" y="528" width="1" height="25" fill="#00ff00"/><rect x="970" y="543" width="1" height="1" fill="#00ff00"/><rect x="972" y="549" width="1" height="1" fill="#00ff00"/><rect x="975" y="540" width="1" height="37" fill="#00ff00"/><rect x="974" y="562" width="1" height="1" fill="#00ff00"/><rect x="976" y="546" width="1" height="1" fill="#00ff00"/><rect x="979" y="563" width="1" height="11" fill="#00ff00"/><rect x="978" y="564" width="1" height="1" fill="#00ff00"/><rect x="980" y="567" width="1" height="1" fill="#00ff00"/><rect x="983" y="561" width="1" height="11" fill="#00ff00"/><rect x="982" y="564" width="1" height="1" fill="#00ff00"/><rect x="984" y="563" width="1" height="1" fill="#00ff00"/><rect x="987" y="544" width="1" height="24" fill="#00ff00"/><rect x="986" y="549" width="1" height="1" fill="#00ff00"/><rect x="988" y="559" width="1" height="1" fill="#00ff00"/><rect x="991" y="538" width="1" height="19" fill="#00ff00"/><rect x="990" y="545" width="1" height="1" fill="#00ff00"/><rect x="992" y="546" width="1" height="1" fill="#00ff00"/><rect x="995" y="536" width="1" height="17" fill="#00ff00"/><rect x="994" y="547" width="1" height="1" fill="#00ff00"/><rect x="996" y="545" width="1" height="1" fill="#00ff00"/><rect x="999" y="532" width="1" height="24" fill="#00ff00"/><rect x="998" y="542" width="1" height="1" fill="#00ff00"/><rect x="1000" y="541" width="1" height="1" fill="#00ff00"/><rect x="1003" y="528" width="1" height="14" fill="#00ff00"/><rect x="1002" y="530" width="1" height="1" fill="#00ff00"/><rect x="1004" y="534" width="1" height="1" fill="#00ff00"/><rect x="1007" y="530" width="1" height="10" fill="#00ff00"/><rect x="1006" y="533" width="1" height="1" fill="#00ff00"/><rect x="1008" y="533" width="1" height="1" fill="#00ff00"/><rect x="1011" y="527" width="1" height="12" fill="#00ff00"/><rect x="1010" y="536" width="1" height="1" fill="#00ff00"/><rect x="1012" y="533" width="1" height="1" fill="#00ff00"/><rect x="1015" y="509" width="1" height="27" fill="#00ff00"/><rect x="1014" y="515" width="1" height="1" fill="#00ff00"/><rect x="1016" y="521" width="1" height="1" fill="#00ff00"/><rect x="1019" y="515" width="1" height="12" fill="#00ff00"/><rect x="1018" y="519" width="1" height="1" fill="#00ff00"/><rect x="1020" y="521" width="1" height="1" fill="#00ff00"/><rect x="1023" y="519" width="1" height="12" fill="#00ff00"/><rect x="1022" y="526" width="1" height="1" fill="#00ff00"/><rect x="1024" y="526" width="1" height="1" fill="#00ff00"/><rect x="1027" y="519" width="1" height="14" fill="#00ff00"/><rect x="1026" y="523" width="1" height="1" fill="#00ff00"/><rect x="1028" y="529" width="1" height="1" fill="#00ff00"/><rect x="1031" y="515" width="1" height="14" fill="#00ff00"/><rect x="1030" y="526" width="1" height="1" fill="#00ff00"/><rect x="1032" y="517" width="1" height="1" fill="#00ff00"/><rect x="1035" y="511" width="1" height="10" fill="#00ff00"/><rect x="1034" y="514" width="1" height="1" fill="#00ff00"/><rect x="1036" y="514" width="1" height="1" fill="#00ff00"/><rect x="1039" y="512" width="1" height="8" fill="#00ff00"/><rect x="1038" y="514" width="1" height="1" fill="#00ff00"/><rect x="1040" y="514" width="1" height="1" fill="#00ff00"/><rect x="1043" y="508" width="1" height="10" fill="#00ff00"/><rect x="1042" y="509" width="1" height="1" fill="#00ff00"/><rect x="1044" y="513" width="1" height="1" fill="#00ff00"/><rect x="1047" y="510" width="1" height="10" fill="#00ff00"/><rect x="1046" y="514" width="1" height="1" fill="#00ff00"/><rect x="1048" y="516" width="1" height="1" fill="#00ff00"/><rect x="1051" y="508" width="1" height="10" fill="#00ff00"/><rect x="1050" y="513" width="1" height="1" fill="#00ff00"/><rect x="1052" y="515" width="1" height="1" fill="#00ff00"/><rect x="1055" y="505" width="1" height="10" fill="#00ff00"/><rect x="1054" y="508" width="1" height="1" fill="#00ff00"/><rect x="1056" y="512" width="1" height="1" fill="#00ff00"/><rect x="1059" y="501" width="1" height="22" fill="#00ff00"/><rect x="1058" y="515" width="1" height="1" fill="#00ff00"/><rect x="1060" y="515" width="1" height="1" fill="#00ff00"/><rect x="1063" y="511" width="1" height="12" fill="#00ff00"/><rect x="1062" y="514" width="1" height="1" fill="#00ff00"/><rect x="1064" y="518" width="1" height="1" fill="#00ff00"/><rect x="1067" y="494" width="1" height="18" fill="#00ff00"/><rect x="1066" y="501" width="1" height="1" fill="#00ff00"/><rect x="1068" y="500" width="1" height="1" fill="#00ff00"/><rect x="1071" y="496" width="1" height="11" fill="#00ff00"/><rect x="1070" y="499" width="1" height="1" fill="#00ff00"/><rect x="1072" y="499" width="1" height="1" fill="#00ff00"/><rect x="1075" y="495" width="1" height="9" fill="#00ff00"/><rect x="1074" y="499" width="1" height="1" fill="#00ff00"/><rect x="1076" y="497" width="1" height="1" fill="#00ff00"/><rect x="1079" y="491" width="1" height="12" fill="#00ff00"/><rect x="1078" y="493" width="1" height="1" fill="#00ff00"/><rect x="1080" y="498" width="1" height="1" fill="#00ff00"/><rect x="1083" y="485" width="1" height="22" fill="#00ff00"/><rect x="1082" y="500" width="1" height="1" fill="#00ff00"/><rect x="1084" y="495" width="1" height="1" fill="#00ff00"/><rect x="1087" y="490" width="1" height="18" fill="#00ff00"/><rect x="1086" y="504" width="1" height="1" fill="#00ff00"/><rect x="1088" y="492" width="1" height="1" fill="#00ff00"/><rect x="1091" y="487" width="1" height="12" fill="#00ff00"/><rect x="1090" y="495" width="1" height="1" fill="#00ff00"/><rect x="1092" y="492" width="1" height="1" fill="#00ff00"/><rect x="1095" y="489" width="1" height="10" fill="#00ff00"/><rect x="1094" y="495" width="1" height="1" fill="#00ff00"/><rect x="1096" y="492" width="1" height="1" fill="#00ff00"/><rect x="1099" y="494" width="1" height="13" fill="#00ff00"/><rect x="1098" y="503" width="1" height="1" fill="#00ff00"/><rect x="1100" y="503" width="1" height="1" fill="#00ff00"/><rect x="1103" y="488" width="1" height="12" fill="#00ff00"/><rect x="1102" y="495" width="1" height="1" fill="#00ff00"/><rect x="1104" y="495" width="1" height="1" fill="#00ff00"/><rect x="1107" y="470" width="1" height="21" fill="#00ff00"/><rect x="1106" y="474" width="1" height="1" fill="#00ff00"/><rect x="1108" y="478" width="1" height="1" fill="#00ff00"/><rect x="1111" y="466" width="1" height="14" fill="#00ff00"/><rect x="1110" y="469" width="1" height="1" fill="#00ff00"/><rect x="1112" y="467" width="1" height="1" fill="#00ff00"/><rect x="1115" y="462" width="1" height="17" fill="#00ff00"/><rect x="1114" y="476" width="1" height="1" fill="#00ff00"/><rect x="1116" y="465" width="1" height="1" fill="#00ff00"/><rect x="1119" y="458" width="1" height="11" fill="#00ff00"/><rect x="1118" y="464" width="1" height="1" fill="#00ff00"/><rect x="1120" y="462" width="1" height="1" fill="#00ff00"/><rect x="1123" y="461" width="1" height="13" fill="#00ff00"/><rect x="1122" y="463" width="1" height="1" fill="#00ff00"/><rect x="1124" y="469" width="1" height="1" fill="#00ff00"/><rect x="1127" y="464" width="1" height="10" fill="#00ff00"/><rect x="1126" y="467" width="1" height="1" fill="#00ff00"/><rect x="1128" y="470" width="1" height="1" fill="#00ff00"/><rect x="1131" y="467" width="1" height="12" fill="#00ff00"/><rect x="1130" y="471" width="1" height="1" fill="#00ff00"/><rect x="1132" y="468" width="1" height="1" fill="#00ff00"/><rect x="1135" y="473" width="1" height="9" fill="#00ff00"/><rect x="1134" y="476" width="1" height="1" fill="#00ff00"/><rect x="1136" y="476" width="1" height="1" fill="#00ff00"/><rect x="1139" y="470" width="1" height="9" fill="#00ff00"/><rect x="1138" y="473" width="1" height="1" fill="#00ff00"/><rect x="1140" y="473" width="1" height="1" fill="#00ff00"/><rect x="1143" y="471" width="1" height="8" fill="#00ff00"/><rect x="1142" y="477" width="1" height="1" fill="#00ff00"/><rect x="1144" y="474" width="1" height="1" fill="#00ff00"/><rect x="1147" y="471" width="1" height="7" fill="#00ff00"/><rect x="1146" y="475" width="1" height="1" fill="#00ff00"/><rect x="1148" y="472" width="1" height="1" fill="#00ff00"/><rect x="1151" y="471" width="1" height="7" fill="#00ff00"/><rect x="1150" y="476" width="1" height="1" fill="#00ff00"/><rect x="1152" y="473" width="1" height="1" fill="#00ff00"/><rect x="1155" y="462" width="1" height="14" fill="#00ff00"/><rect x="1154" y="467" width="1" height="1" fill="#00ff00"/><rect x="1156" y="464" width="1" height="1" fill="#00ff00"/><rect x="1159" y="453" width="1" height="16" fill="#00ff00"/><rect x="1158" y="462" width="1" height="1" fill="#00ff00"/><rect x="1160" y="458" width="1" height="1" fill="#00ff00"/><rect x="1163" y="452" width="1" height="13" fill="#00ff00"/><rect x="1162" y="457" width="1" height="1" fill="#00ff00"/><rect x="1164" y="456" width="1" height="1" fill="#00ff00"/><rect x="1167" y="458" width="1" height="11" fill="#00ff00"/><rect x="1166" y="466" width="1" height="1" fill="#00ff00"/><rect x="1168" y="461" width="1" height="1" fill="#00ff00"/><rect x="1171" y="457" width="1" height="9" fill="#00ff00"/><rect x="1170" y="461" width="1" height="1" fill="#00ff00"/><rect x="1172" y="464" width="1" height="1" fill="#00ff00"/><rect x="1175" y="451" width="1" height="13" fill="#00ff00"/><rect x="1174" y="457" width="1" height="1" fill="#00ff00"/><rect x="1176" y="456" width="1" height="1" fill="#00ff00"/><rect x="1179" y="447" width="1" height="14" fill="#00ff00"/><rect x="1178" y="449" width="1" height="1" fill="#00ff00"/><rect x="1180" y="454" width="1" height="1" fill="#00ff00"/><rect x="1183" y="444" width="1" height="9" fill="#00ff00"/><rect x="1182" y="447" width="1" height="1" fill="#00ff00"/><rect x="1184" y="451" width="1" height="1" fill="#00ff00"/><rect x="1187" y="447" width="1" height="4" fill="#00ff00"/><rect x="1186" y="448" width="1" height="1" fill="#00ff00"/><rect x="1188" y="449" width="1" height="1" fill="#00ff00"/><rect x="799" y="603" width="1" height="30" fill="#c0c0c0"/><rect x="803" y="603" width="1" height="30" fill="#c0c0c0"/><rect x="807" y="603" width="1" height="30" fill="#c0c0c0"/><rect x="811" y="603" width="1" height="30" fill="#c0c0c0"/><rect x="815" y="603" width="1" height="30" fill="#c0c0c0"/><rect x="819" y="603" width="1" height="30" fill="#c0c0c0"/><rect x="823" y="603" width="1" height="30" fill="#c0c0c0"/><rect x="827" y="604" width="1" height="29" fill="#c0c0c0"/><rect x="831" y="610" width="1" height="23" fill="#c0c0c0"/><rect x="835" y="618" width="1" height="15" fill="#c0c0c0"/><rect x="839" y="624" width="1" height="9" fill="#c0c0c0"/><rect x="843" y="628" width="1" height="5" fill="#c0c0c0"/><rect x="847" y="633" width="1" height="1" fill="#c0c0c0"/><rect x="851" y="633" width="1" height="5" fill="#c0c0c0"/><rect x="855" y="633" width="1" height="9" fill="#c0c0c0"/><rect x="859" y="633" width="1" height="10" fill="#c0c0c0"/><rect x="863" y="633" width="1" height="12" fill="#c0c0c0"/><rect x="867" y="633" width="1" height="12" fill="#c0c0c0"/><rect x="871" y="633" width="1" height="13" fill="#c0c0c0"/><rect x="875" y="633" width="1" height="14" fill="#c0c0c0"/><rect x="879" y="633" width="1" height="15" fill="#c0c0c0"/><rect x="883" y="633" width="1" height="15" fill="#c0c0c0"/><rect x="887" y="633" width="1" height="16" fill="#c0c0c0"/><rect x="891" y="633" width="1" height="16" fill="#c0c0c0"/><rect x="895" y="633" width="1" height="16" fill="#c0c0c0"/><rect x="899" y="633" width="1" height="17" fill="#c0c0c0"/><rect x="903" y="633" width="1" height="17" fill="#c0c0c0"/><rect x="907" y="633" width="1" height="18" fill="#c0c0c0"/><rect x="911" y="633" width="1" height="17" fill="#c0c0c0"/><rect x="915" y="633" width="1" height="17" fill="#c0c0c0"/><rect x="919" y="633" width="1" height="17" fill="#c0c0c0"/><rect x="923" y="633" width="1" height="16" fill="#c0c0c0"/><rect x="927" y="633" width="1" height="11" fill="#c0c0c0"/><rect x="931" y="633" width="1" height="9" fill="#c0c0c0"/><rect x="935" y="633" width="1" height="8" fill="#c0c0c0"/><rect x="939" y="633" width="1" height="8" fill="#c0c0c0"/><rect x="943" y="633" width="1" height="8" fill="#c0c0c0"/><rect x="947" y="633" width="1" height="8" fill="#c0c0c0"/><rect x="951" y="633" width="1" height="7" fill="#c0c0c0"/><rect x="955" y="633" width="1" height="7" fill="#c0c0c0"/><rect x="959" y="633" width="1" height="8" fill="#c0c0c0"/><rect x="963" y="633" width="1" height="8" fill="#c0c0c0"/><rect x="967" y="633" width="1" height="8" fill="#c0c0c0"/><rect x="971" y="633" width="1" height="11" fill="#c0c0c0"/><rect x="975" y="633" width="1" height="13" fill="#c0c0c0"/><rect x="979" y="633" width="1" height="14" fill="#c0c0c0"/><rect x="983" y="633" width="1" height="16" fill="#c0c0c0"/><rect x="987" y="633" width="1" height="18" fill="#c0c0c0"/><rect x="991" y="633" width="1" height="19" fill="#c0c0c0"/><rect x="995" y="633" width="1" height="17" fill="#c0c0c0"/><rect x="999" y="633" width="1" height="16" fill="#c0c0c0"/><rect x="1003" y="633" width="1" height="14" fill="#c0c0c0"/><rect x="1007" y="633" width="1" height="12" fill="#c0c0c0"/><rect x="1011" y="633" width="1" height="10" fill="#c0c0c0"/><rect x="1015" y="633" width="1" height="8" fill="#c0c0c0"/><rect x="1019" y="633" width="1" height="6" fill="#c0c0c0"/><rect x="1023" y="633" width="1" height="3" fill="#c0c0c0"/><rect x="1027" y="633" width="1" height="1" fill="#c0c0c0"/><rect x="1031" y="630" width="1" height="3" fill="#c0c0c0"/><rect x="1035" y="629" width="1" height="4" fill="#c0c0c0"/><rect x="1039" y="628" width="1" height="5" fill="#c0c0c0"/><rect x="1043" y="627" width="1" height="6" fill="#c0c0c0"/><rect x="1047" y="626" width="1" height="7" fill="#c0c0c0"/><rect x="1051" y="626" width="1" height="7" fill="#c0c0c0"/><rect x="1055" y="625" width="1" height="8" fill="#c0c0c0"/><rect x="1059" y="624" width="1" height="9" fill="#c0c0c0"/><rect x="1063" y="623" width="1" height="10" fill="#c0c0c0"/><rect x="1067" y="622" width="1" height="11" fill="#c0c0c0"/><rect x="1071" y="621" width="1" height="12" fill="#c0c0c0"/><rect x="1075" y="620" width="1" height="13" fill="#c0c0c0"/><rect x="1079" y="620" width="1" height="13" fill="#c0c0c0"/><rect x="1083" y="619" width="1" height="14" fill="#c0c0c0"/><rect x="1087" y="618" width="1" height="15" fill="#c0c0c0"/><rect x="1091" y="617" width="1" height="16" fill="#c0c0c0"/><rect x="1095" y="616" width="1" height="17" fill="#c0c0c0"/><rect x="1099" y="616" width="1" height="17" fill="#c0c0c0"/><rect x="1103" y="615" width="1" height="18" fill="#c0c0c0"/><rect x="1107" y="614" width="1" height="19" fill="#c0c0c0"/><rect x="1111" y="606" width="1" height="27" fill="#c0c0c0"/><rect x="1115" y="606" width="1" height="27" fill="#c0c0c0"/><rect x="1119" y="606" width="1" height="27" fill="#c0c0c0"/><rect x="1123" y="606" width="1" height="27" fill="#c0c0c0"/><rect x="1127" y="606" width="1" height="27" fill="#c0c0c0"/><rect x="1131" y="606" width="1" height="27" fill="#c0c0c0"/><rect x="1135" y="606" width="1" height="27" fill="#c0c0c0"/><rect x="1139" y="607" width="1" height="26" fill="#c0c0c0"/><rect x="1143" y="609" width="1" height="24" fill="#c0c0c0"/><rect x="1147" y="610" width="1" height="23" fill="#c0c0c0"/><rect x="1151" y="610" width="1" height="23" fill="#c0c0c0"/><rect x="1155" y="610" width="1" height="23" fill="#c0c0c0"/><rect x="1159" y="610" width="1" height="23" fill="#c0c0c0"/><rect x="1163" y="610" width="1" height="23" fill="#c0c0c0"/><rect x="1167" y="610" width="1" height="23" fill="#c0c0c0"/><rect x="1171" y="611" width="1" height="22" fill="#c0c0c0"/><rect x="1175" y="611" width="1" height="22" fill="#c0c0c0"/><rect x="1179" y="611" width="1" height="22" fill="#c0c0c0"/><rect x="1183" y="611" width="1" height="22" fill="#c0c0c0"/><rect x="1187" y="611" width="1" height="22" fill="#c0c0c0"/><polyline points="837.2,604.9 849.0,616.7 866.7,634.4 893.2,644.8 922.7,650.7 943.4,643.3 967.0,640.3 981.7,644.8 990.0,644.8 998.8,649.2 1010.6,650.7 1019.5,646.2 1037.2,634.4 1063.7,622.6 1093.2,616.7 1113.9,611.4 1137.5,607.9 1155.2,609.4 1172.9,612.3 1187.6,610.3" fill="none" stroke="#ff0000" stroke-width="1" shape-rendering="crispEdges" stroke-dasharray="3,3"/></g><rect x="795.5" y="431.5" width="400" height="152" fill="none" stroke="#fff" stroke-width="1" shape-rendering="crispEdges"/><rect x="795.5" y="585.5" width="400" height="76" fill="none" stroke="#fff" stroke-width="1" shape-rendering="crispEdges"/><rect x="1195" y="454" width="5" height="1" fill="#fff"/><text x="1200.5" y="458.0" fill="#fff" font-size="12" text-anchor="start" font-family="Liberation Sans" filter="url(#crisp)" letter-spacing="0.3">110.830</text><rect x="1195" y="486" width="5" height="1" fill="#fff"/><text x="1200.5" y="490.5" fill="#fff" font-size="12" text-anchor="start" font-family="Liberation Sans" filter="url(#crisp)" letter-spacing="0.3">110.540</text><rect x="1195" y="518" width="5" height="1" fill="#fff"/><text x="1200.5" y="522.5" fill="#fff" font-size="12" text-anchor="start" font-family="Liberation Sans" filter="url(#crisp)" letter-spacing="0.3">110.250</text><rect x="1195" y="551" width="5" height="1" fill="#fff"/><text x="1200.5" y="555.5" fill="#fff" font-size="12" text-anchor="start" font-family="Liberation Sans" filter="url(#crisp)" letter-spacing="0.3">109.960</text><rect x="1195" y="592" width="5" height="1" fill="#fff"/><text x="1200.5" y="597.0" fill="#fff" font-size="12" text-anchor="start" font-family="Liberation Sans" filter="url(#crisp)" letter-spacing="0.3">0.2149</text><rect x="1195" y="634" width="5" height="1" fill="#fff"/><text x="1200.5" y="638.0" fill="#fff" font-size="12" text-anchor="start" font-family="Liberation Sans" filter="url(#crisp)" letter-spacing="0.3">0.0000</text><rect x="1195" y="654" width="5" height="1" fill="#fff"/><text x="1200.5" y="659.0" fill="#fff" font-size="12" text-anchor="start" font-family="Liberation Sans" filter="url(#crisp)" letter-spacing="0.3">-0.1241</text><rect x="1198" y="442" width="54" height="13" fill="#778899"/><text x="1201" y="452.5" fill="#0a0a0a" font-size="12" text-anchor="start" font-family="Liberation Sans"  letter-spacing="0.3">110.878</text><rect x="795" y="661" width="1" height="5" fill="#fff"/><text x="795.5" y="676.5" fill="#fff" font-size="12" text-anchor="start" font-family="Liberation Sans" filter="url(#crisp)" letter-spacing="0.15">17 Jun 2021</text><rect x="923" y="661" width="1" height="5" fill="#fff"/><text x="923.5" y="676.5" fill="#fff" font-size="12" text-anchor="start" font-family="Liberation Sans" filter="url(#crisp)" letter-spacing="0.15">18 Jun 13:00</text><rect x="1051" y="661" width="1" height="5" fill="#fff"/><text x="1051.5" y="676.5" fill="#fff" font-size="12" text-anchor="start" font-family="Liberation Sans" filter="url(#crisp)" letter-spacing="0.15">21 Jun 23:00</text><rect x="1179" y="661" width="1" height="5" fill="#fff"/><text x="1179.5" y="676.5" fill="#fff" font-size="12" text-anchor="start" font-family="Liberation Sans" filter="url(#crisp)" letter-spacing="0.15">23 Jun 07:00</text><rect x="800" y="436" width="17" height="14" rx="2" fill="#f4f4fb" stroke="#c8c8e0" stroke-width="1"/><rect x="801" y="437" width="15" height="3" fill="#8a8af0"/><rect x="802" y="441" width="6" height="8" fill="#f08a8a"/><rect x="809" y="441" width="6" height="8" fill="#8a8af5"/><rect x="802" y="443" width="6" height="1" fill="#fbdede"/><rect x="802" y="446" width="6" height="1" fill="#fbdede"/><rect x="809" y="443" width="6" height="1" fill="#dedefb"/><rect x="809" y="446" width="6" height="1" fill="#dedefb"/><text x="826.5" y="449" fill="#fff" font-size="12" text-anchor="start" font-family="Liberation Sans" filter="url(#crisp)" letter-spacing="-0.25">USDJPY, H1:&#160; US Dollar vs Japanese Yen</text><text x="797" y="600" fill="#fff" font-size="12" text-anchor="start" font-family="Liberation Sans" filter="url(#crisp)" >MACD(12,26,9) 0.1027 0.0976</text></svg>
<div class="r" style="left:309px;top:788px;width:1609px;height:26px;background:#f0f0f0;"></div>
<div class="r" style="left:309px;top:788px;width:2px;height:26px;background:#7a7a7a;"></div>
<div class="r" style="left:311px;top:788px;width:1px;height:26px;background:#ffffff;"></div>
<div class="r" style="left:312px;top:788px;width:1606px;height:2px;background:#ffffff;"></div>
<div class="r" style="left:310px;top:790px;width:1608px;height:1px;background:#000;"></div>
<div class="r" style="left:310px;top:791px;width:1608px;height:1px;background:#d8d8d8;"></div>
<div class="r" style="left:313px;top:790px;width:108px;height:24px;background:#fff;border:1px solid #000;border-top:none;box-shadow:1px 1px 0 #b8b8b8"></div>
<div class="r" style="left:314px;top:790px;width:106px;height:2px;background:#fff;"></div>
<div class="t" style="left:329px;top:796.15px;font-size:14px;color:#000;font-weight:normal;letter-spacing:-0.6px">EURUSD,H1</div>
<div class="t" style="left:437px;top:796.15px;font-size:14px;color:#808080;font-weight:normal;letter-spacing:-0.6px">USDCHF,H1</div>
<div class="r" style="left:530px;top:795px;width:1px;height:17px;background:#808080;"></div>
<div class="t" style="left:546px;top:796.15px;font-size:14px;color:#808080;font-weight:normal;letter-spacing:-0.6px">GBPUSD,H1</div>
<div class="r" style="left:639px;top:795px;width:1px;height:17px;background:#808080;"></div>
<div class="t" style="left:654px;top:796.15px;font-size:14px;color:#808080;font-weight:normal;letter-spacing:-0.6px">USDJPY,H1</div>
<svg class="s" style="left:1868px;top:795px;" width="40" height="14" viewBox="1868 795 40 14"><path d="M1878 798 L1873 802 L1878 806 Z" fill="#a8a8a8"/><path d="M1901 798 L1906 802 L1901 806 Z" fill="#a8a8a8"/></svg>
<div class="r" style="left:0px;top:815px;width:1918px;height:33px;background:#f0f0f0;"></div>
<div class="r" style="left:0px;top:814px;width:310px;height:1px;background:#a0a0a0;"></div>
<div class="r" style="left:310px;top:814px;width:1608px;height:1px;background:#e3e3e3;"></div>
<div class="r" style="left:0px;top:815px;width:1918px;height:1px;background:#fcfcfc;"></div>
<svg class="s" style="left:5px;top:821px;" width="14" height="12" viewBox="5 821 14 12"><path d="M7.5 824 L14.5 830.5 M14.5 824 L7.5 830.5" stroke="#000" stroke-width="1.6"/></svg>
<div class="r" style="left:3px;top:838px;width:16px;height:10px;background:#d0deec;"></div>
<div class="r" style="left:20px;top:820px;width:1895px;height:28px;background:#ffffff;border-top:1px solid #a0a0a0;border-left:1px solid #a0a0a0"></div>
<div class="t" style="left:27.5px;top:827.73px;font-size:14.5px;color:#000;font-weight:normal;">Subject</div>
<div class="r" style="left:956px;top:821px;width:1px;height:27px;background:#dcdcdc;"></div>
<div class="t" style="left:963.5px;top:827.73px;font-size:14.5px;color:#000;font-weight:normal;">From</div>
<div class="r" style="left:1330px;top:821px;width:1px;height:27px;background:#dcdcdc;"></div>
<div class="t" style="left:1337px;top:827.73px;font-size:14.5px;color:#000;font-weight:normal;">To</div>
<div class="r" style="left:1704px;top:821px;width:1px;height:27px;background:#dcdcdc;"></div>
<div class="t" style="right:31px;top:827.73px;font-size:14.5px;color:#000;font-weight:normal;">Time</div>
<div class="r" style="left:1893px;top:821px;width:22px;height:27px;background:#f0f0f0;"></div>
<svg class="s" style="left:1895px;top:824px;" width="18" height="14" viewBox="1895 824 18 14"><path d="M1899.5 834.5 L1904 829.5 L1908.5 834.5" fill="none" stroke="#606060" stroke-width="1.6"/></svg>
<div class="r" style="left:1894px;top:842px;width:19px;height:6px;background:#cdcdcd;"></div></body></html>
